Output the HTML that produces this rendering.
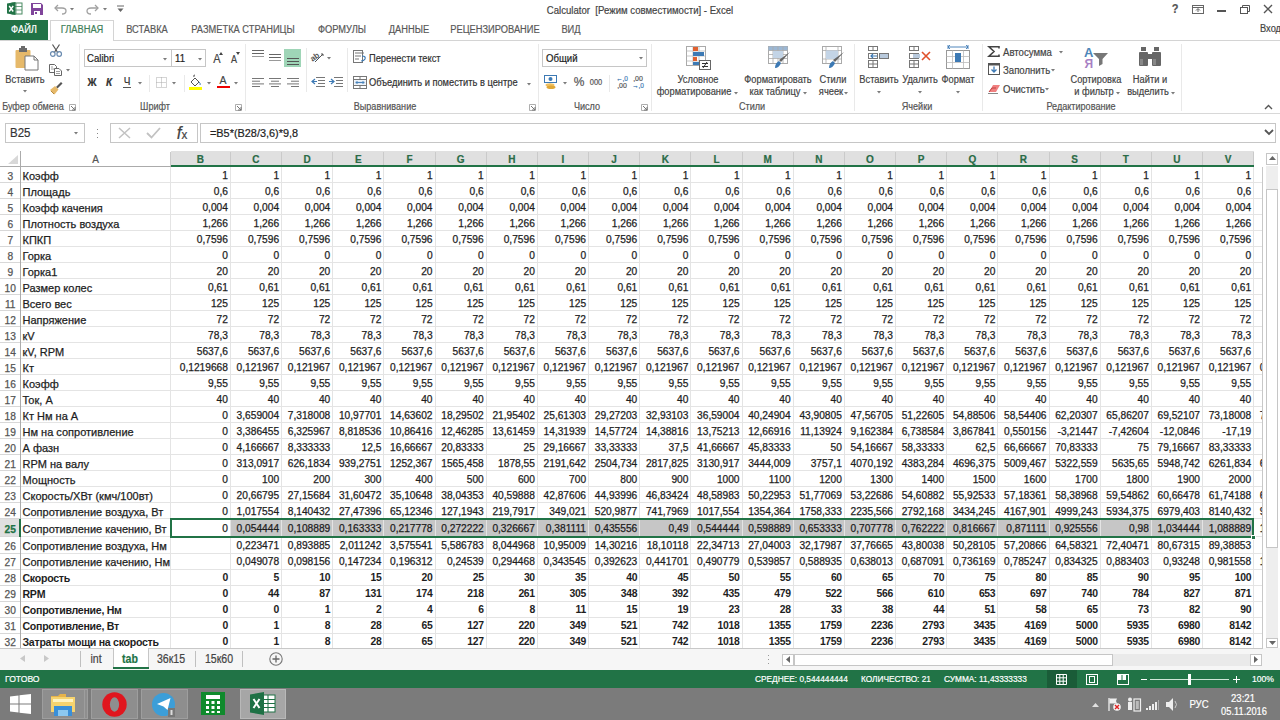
<!DOCTYPE html>
<html><head><meta charset="utf-8"><style>
html,body{margin:0;padding:0;width:1280px;height:720px;overflow:hidden;background:#fff;position:relative}
body{font-family:"Liberation Sans",sans-serif}
.b{position:absolute}
.t{position:absolute;white-space:nowrap;line-height:14px;font-family:"Liberation Sans",sans-serif}
svg.b{overflow:visible}
.t{-webkit-text-stroke:0.2px currentColor}
.g .t{-webkit-text-stroke:0.25px currentColor}
</style></head><body>
<div class="b" style="left:0px;top:0px;width:1280px;height:20px;background:#fff"></div>
<svg class="b" style="left:7px;top:2px" width="15" height="13" viewBox="0 0 15 13"><rect x="5" y="1" width="10" height="11" fill="#fff" stroke="#4a8a63" stroke-width="1"/><path d="M9 1V12M5 4.5H15M5 8H15" stroke="#4a8a63" stroke-width="0.8"/><path d="M0 1.5L8.5 0V13L0 11.5Z" fill="#217346"/><path d="M2.2 4L6.2 9.5M6.2 4L2.2 9.5" stroke="#fff" stroke-width="1.4"/></svg>
<svg class="b" style="left:31px;top:3px" width="12" height="12" viewBox="0 0 12 12"><path d="M0 0H10L12 2V12H0Z" fill="#80459b"/><rect x="2" y="1" width="8" height="4" fill="#fff"/><rect x="3" y="8" width="6" height="4" fill="#fff"/><rect x="4" y="9" width="2" height="2" fill="#80459b"/></svg>
<svg class="b" style="left:54px;top:4px" width="13" height="10" viewBox="0 0 13 10"><path d="M4 1L1 4L4 7" fill="none" stroke="#a0a0a0" stroke-width="1.3"/><path d="M1.5 4H8Q12 4 12 7Q12 10 8 10" fill="none" stroke="#a0a0a0" stroke-width="1.3"/></svg>
<svg class="b" style="left:70px;top:8px" width="4" height="2.5" viewBox="0 0 4 2.5"><path d="M0 0H4L2 2.5Z" fill="#7a7a7a"/></svg>
<svg class="b" style="left:86px;top:4px" width="13" height="10" viewBox="0 0 13 10"><path d="M9 1L12 4L9 7" fill="none" stroke="#a0a0a0" stroke-width="1.3"/><path d="M11.5 4H5Q1 4 1 7Q1 10 5 10" fill="none" stroke="#a0a0a0" stroke-width="1.3"/></svg>
<svg class="b" style="left:103px;top:8px" width="4" height="2.5" viewBox="0 0 4 2.5"><path d="M0 0H4L2 2.5Z" fill="#7a7a7a"/></svg>
<svg class="b" style="left:117px;top:6px" width="7" height="6" viewBox="0 0 7 6"><path d="M0 0H7" stroke="#666" stroke-width="1"/><path d="M0.5 2.5H6.5L3.5 6Z" fill="#666"/></svg>
<div class="t" style="left:489.5px;width:300px;text-align:center;top:3.00px;font-size:10.75px;color:#444;font-weight:normal;transform:scaleX(0.893);transform-origin:center;">Calculator&nbsp; [Режим совместимости] - Excel</div>
<div class="t" style="left:1024.5px;width:300px;text-align:center;top:2.00px;font-size:12.32px;color:#555;font-weight:bold;transform:scaleX(0.893);transform-origin:center;">?</div>
<svg class="b" style="left:1192px;top:5px" width="12" height="9" viewBox="0 0 12 9"><rect x="0.5" y="0.5" width="11" height="8" fill="none" stroke="#666"/><path d="M0.5 2.5H11.5" stroke="#666"/><path d="M6 7V4M4 5.5L6 3.5L8 5.5" fill="none" stroke="#666"/></svg>
<div class="b" style="left:1217px;top:10px;width:9px;height:1.5px;background:#555"></div>
<svg class="b" style="left:1240px;top:5px" width="10" height="9" viewBox="0 0 10 9"><rect x="0.5" y="2.5" width="7" height="6" fill="none" stroke="#555"/><path d="M2.5 2.5V0.5H9.5V6.5H7.5" fill="none" stroke="#555"/></svg>
<svg class="b" style="left:1263px;top:4px" width="10" height="10" viewBox="0 0 10 10"><path d="M1 1L9 9M9 1L1 9" stroke="#555" stroke-width="1.4"/></svg>
<div class="b" style="left:0px;top:20px;width:47.5px;height:20px;background:#217346"></div>
<div class="t" style="left:-126.25px;width:300px;text-align:center;top:23.00px;font-size:10.42px;color:#fff;font-weight:normal;transform:scaleX(0.893);transform-origin:center;">ФАЙЛ</div>
<div class="b" style="left:50px;top:20px;width:64px;height:21px;background:#fff;border:1px solid #d4d4d4;border-bottom:none;box-sizing:border-box"></div>
<div class="t" style="left:-68px;width:300px;text-align:center;top:23.00px;font-size:10.42px;color:#3f7f5a;font-weight:normal;transform:scaleX(0.893);transform-origin:center;">ГЛАВНАЯ</div>
<div class="t" style="left:-2.6999999999999886px;width:300px;text-align:center;top:23.00px;font-size:10.42px;color:#595959;font-weight:normal;transform:scaleX(0.893);transform-origin:center;">ВСТАВКА</div>
<div class="t" style="left:93px;width:300px;text-align:center;top:23.00px;font-size:10.42px;color:#595959;font-weight:normal;transform:scaleX(0.893);transform-origin:center;">РАЗМЕТКА СТРАНИЦЫ</div>
<div class="t" style="left:192px;width:300px;text-align:center;top:23.00px;font-size:10.42px;color:#595959;font-weight:normal;transform:scaleX(0.893);transform-origin:center;">ФОРМУЛЫ</div>
<div class="t" style="left:259px;width:300px;text-align:center;top:23.00px;font-size:10.42px;color:#595959;font-weight:normal;transform:scaleX(0.893);transform-origin:center;">ДАННЫЕ</div>
<div class="t" style="left:345px;width:300px;text-align:center;top:23.00px;font-size:10.42px;color:#595959;font-weight:normal;transform:scaleX(0.893);transform-origin:center;">РЕЦЕНЗИРОВАНИЕ</div>
<div class="t" style="left:421px;width:300px;text-align:center;top:23.00px;font-size:10.42px;color:#595959;font-weight:normal;transform:scaleX(0.893);transform-origin:center;">ВИД</div>
<div class="t" style="left:1260px;top:21.50px;font-size:10.42px;color:#444;font-weight:normal;transform:scaleX(0.893);transform-origin:left;">Вход</div>
<div class="b" style="left:0px;top:39.5px;width:50px;height:1px;background:#d4d4d4"></div>
<div class="b" style="left:114px;top:39.5px;width:1166px;height:1px;background:#d4d4d4"></div>
<div class="b" style="left:0px;top:40.5px;width:1280px;height:72.5px;background:#fff"></div>
<div class="b" style="left:0px;top:112.5px;width:1280px;height:1.2px;background:#d8d8d8"></div>
<div class="b" style="left:79px;top:44px;width:1px;height:67px;background:#e9e9e9"></div>
<div class="b" style="left:245px;top:44px;width:1px;height:67px;background:#e9e9e9"></div>
<div class="b" style="left:537.6px;top:44px;width:1px;height:67px;background:#e9e9e9"></div>
<div class="b" style="left:650.7px;top:44px;width:1px;height:67px;background:#e9e9e9"></div>
<div class="b" style="left:854px;top:44px;width:1px;height:67px;background:#e9e9e9"></div>
<div class="b" style="left:981.6px;top:44px;width:1px;height:67px;background:#e9e9e9"></div>
<div class="b" style="left:1180.6px;top:44px;width:1px;height:67px;background:#e9e9e9"></div>
<div class="t" style="left:-117px;width:300px;text-align:center;top:100.00px;font-size:10.19px;color:#555;font-weight:normal;transform:scaleX(0.893);transform-origin:center;">Буфер обмена</div>
<div class="t" style="left:5px;width:300px;text-align:center;top:100.00px;font-size:10.19px;color:#555;font-weight:normal;transform:scaleX(0.893);transform-origin:center;">Шрифт</div>
<div class="t" style="left:235.3px;width:300px;text-align:center;top:100.00px;font-size:10.19px;color:#555;font-weight:normal;transform:scaleX(0.893);transform-origin:center;">Выравнивание</div>
<div class="t" style="left:437.4px;width:300px;text-align:center;top:100.00px;font-size:10.19px;color:#555;font-weight:normal;transform:scaleX(0.893);transform-origin:center;">Число</div>
<div class="t" style="left:602px;width:300px;text-align:center;top:100.00px;font-size:10.19px;color:#555;font-weight:normal;transform:scaleX(0.893);transform-origin:center;">Стили</div>
<div class="t" style="left:767px;width:300px;text-align:center;top:100.00px;font-size:10.19px;color:#555;font-weight:normal;transform:scaleX(0.893);transform-origin:center;">Ячейки</div>
<div class="t" style="left:931px;width:300px;text-align:center;top:100.00px;font-size:10.19px;color:#555;font-weight:normal;transform:scaleX(0.893);transform-origin:center;">Редактирование</div>
<svg class="b" style="left:69px;top:104px" width="7" height="7" viewBox="0 0 7 7"><path d="M0.5 0.5H6.5V6.5H0.5Z" fill="none" stroke="#999" stroke-width="0.8"/><path d="M2 2L6 6M3 6H6V3" fill="none" stroke="#777" stroke-width="1"/></svg>
<svg class="b" style="left:235px;top:104px" width="7" height="7" viewBox="0 0 7 7"><path d="M0.5 0.5H6.5V6.5H0.5Z" fill="none" stroke="#999" stroke-width="0.8"/><path d="M2 2L6 6M3 6H6V3" fill="none" stroke="#777" stroke-width="1"/></svg>
<svg class="b" style="left:528.8px;top:104px" width="7" height="7" viewBox="0 0 7 7"><path d="M0.5 0.5H6.5V6.5H0.5Z" fill="none" stroke="#999" stroke-width="0.8"/><path d="M2 2L6 6M3 6H6V3" fill="none" stroke="#777" stroke-width="1"/></svg>
<svg class="b" style="left:640.7px;top:104px" width="7" height="7" viewBox="0 0 7 7"><path d="M0.5 0.5H6.5V6.5H0.5Z" fill="none" stroke="#999" stroke-width="0.8"/><path d="M2 2L6 6M3 6H6V3" fill="none" stroke="#777" stroke-width="1"/></svg>
<svg class="b" style="left:1264px;top:104px" width="9" height="6" viewBox="0 0 9 6"><path d="M1 5L4.5 1.5L8 5" fill="none" stroke="#555" stroke-width="1.4"/></svg>
<svg class="b" style="left:15px;top:46px" width="24" height="25" viewBox="0 0 24 25"><rect x="0.5" y="4" width="15" height="18" rx="1" fill="#e6b96a"/><rect x="4" y="2" width="8" height="4" fill="#6b6b6b"/><rect x="6" y="0" width="4" height="3" fill="#6b6b6b"/><path d="M10 10H19L23 14V24H10Z" fill="#fff" stroke="#777" stroke-width="1"/><path d="M19 10V14H23" fill="none" stroke="#777" stroke-width="1"/></svg>
<div class="t" style="left:-125.5px;width:300px;text-align:center;top:72.50px;font-size:10.42px;color:#444;font-weight:normal;transform:scaleX(0.893);transform-origin:center;">Вставить</div>
<svg class="b" style="left:23px;top:90px" width="4" height="2.5" viewBox="0 0 4 2.5"><path d="M0 0H4L2 2.5Z" fill="#7a7a7a"/></svg>
<svg class="b" style="left:49px;top:44px" width="14" height="13" viewBox="0 0 14 13"><path d="M3.5 0.5L9 9M10.5 0.5L5 9" stroke="#555" stroke-width="1.2"/><circle cx="3.8" cy="10" r="2.3" fill="none" stroke="#6a8bb0" stroke-width="1.2"/><circle cx="10.2" cy="10" r="2.3" fill="none" stroke="#6a8bb0" stroke-width="1.2"/></svg>
<svg class="b" style="left:48.5px;top:63.5px" width="13" height="12" viewBox="0 0 13 12"><path d="M0.5 0.5H5.5L7.5 2.5V8.5H0.5Z" fill="#fff" stroke="#666"/><path d="M2 3H4M2 5H5" stroke="#888" stroke-width="0.8"/><path d="M5.5 4.5H10L12.5 7V11.5H5.5Z" fill="#fff" stroke="#666"/><path d="M7 7.5H11M7 9.5H11" stroke="#888" stroke-width="0.8"/></svg>
<svg class="b" style="left:66px;top:68.5px" width="4" height="2.5" viewBox="0 0 4 2.5"><path d="M0 0H4L2 2.5Z" fill="#7a7a7a"/></svg>
<svg class="b" style="left:49px;top:81px" width="14" height="14" viewBox="0 0 14 14"><path d="M7 6L12 1L13.5 2.5L8.5 7.5Z" fill="#555"/><path d="M1 9L6 5L9.5 8.5L5.5 13.5Z" fill="#e6b96a"/><path d="M2 10L5 13" stroke="#b58a3f"/></svg>
<div class="b" style="left:83.6px;top:49.3px;width:88px;height:17.4px;border:1px solid #c6c6c6;box-sizing:border-box;background:#fff"></div>
<div class="b" style="left:171.5px;top:49.3px;width:34.5px;height:17.4px;border:1px solid #c6c6c6;border-left:none;box-sizing:border-box;background:#fff"></div>
<div class="t" style="left:86.5px;top:51.00px;font-size:10.75px;color:#222;font-weight:normal;transform:scaleX(0.893);transform-origin:left;">Calibri</div>
<svg class="b" style="left:163px;top:57.5px" width="4" height="2.5" viewBox="0 0 4 2.5"><path d="M0 0H4L2 2.5Z" fill="#7a7a7a"/></svg>
<div class="t" style="left:175px;top:51.00px;font-size:10.75px;color:#222;font-weight:normal;transform:scaleX(0.893);transform-origin:left;">11</div>
<svg class="b" style="left:197.5px;top:57.5px" width="4" height="2.5" viewBox="0 0 4 2.5"><path d="M0 0H4L2 2.5Z" fill="#7a7a7a"/></svg>
<div class="t" style="left:66.5px;width:300px;text-align:center;top:52.00px;font-size:12.32px;color:#444;font-weight:normal;transform:scaleX(0.893);transform-origin:center;">A</div>
<svg class="b" style="left:219px;top:52px" width="4" height="3" viewBox="0 0 4 3"><path d="M0 3L2 0L4 3Z" fill="#444"/></svg>
<div class="t" style="left:83.5px;width:300px;text-align:center;top:53.00px;font-size:10.08px;color:#444;font-weight:normal;transform:scaleX(0.893);transform-origin:center;">A</div>
<svg class="b" style="left:236px;top:52px" width="4" height="3" viewBox="0 0 4 3"><path d="M0 0H4L2 3Z" fill="#444"/></svg>
<div class="t" style="left:-58px;width:300px;text-align:center;top:74.80px;font-size:11.2px;color:#333;font-weight:bold;transform:scaleX(0.893);transform-origin:center;">Ж</div>
<div class="t" style="left:-41.5px;width:300px;text-align:center;top:74.80px;font-size:11.2px;color:#333;font-weight:bold;transform:scaleX(0.893);transform-origin:center;font-style:italic">К</div>
<div class="t" style="left:-23px;width:300px;text-align:center;top:74.30px;font-size:11.2px;color:#333;font-weight:normal;transform:scaleX(0.893);transform-origin:center;">Ч</div>
<div class="b" style="left:123px;top:87.2px;width:8px;height:1px;background:#555"></div>
<svg class="b" style="left:138px;top:81.5px" width="4" height="2.5" viewBox="0 0 4 2.5"><path d="M0 0H4L2 2.5Z" fill="#7a7a7a"/></svg>
<div class="b" style="left:149.4px;top:75px;width:1px;height:17px;background:#e9e9e9"></div>
<svg class="b" style="left:156px;top:76.5px" width="11" height="11" viewBox="0 0 11 11"><rect x="0.5" y="0.5" width="10" height="10" fill="none" stroke="#aaa" stroke-dasharray="1 1"/><path d="M5.5 0.5V10.5M0.5 5.5H10.5" stroke="#aaa" stroke-dasharray="1 1"/></svg>
<svg class="b" style="left:172.4px;top:81.5px" width="4" height="2.5" viewBox="0 0 4 2.5"><path d="M0 0H4L2 2.5Z" fill="#7a7a7a"/></svg>
<div class="b" style="left:183.6px;top:75px;width:1px;height:17px;background:#e9e9e9"></div>
<svg class="b" style="left:188px;top:74.5px" width="15" height="15" viewBox="0 0 15 15"><path d="M3 7L7 3L11 7L7 11Z" fill="#fff" stroke="#555"/><path d="M6 2Q5 0 7 0" fill="none" stroke="#555"/><path d="M11 7Q13 9 12 10" fill="none" stroke="#3c79b4"/><rect x="1" y="12" width="13" height="3" fill="#ffff00"/></svg>
<svg class="b" style="left:207px;top:81.5px" width="4" height="2.5" viewBox="0 0 4 2.5"><path d="M0 0H4L2 2.5Z" fill="#7a7a7a"/></svg>
<div class="t" style="left:73px;width:300px;text-align:center;top:72.80px;font-size:11.76px;color:#444;font-weight:normal;transform:scaleX(0.893);transform-origin:center;">A</div>
<div class="b" style="left:216.5px;top:85.8px;width:13px;height:2.6px;background:#e00"></div>
<svg class="b" style="left:234px;top:81.5px" width="4" height="2.5" viewBox="0 0 4 2.5"><path d="M0 0H4L2 2.5Z" fill="#7a7a7a"/></svg>
<svg class="b" style="left:251.5px;top:50px" width="12" height="7" viewBox="0 0 12 7"><rect y="0" width="12" height="1" fill="#666"/><rect y="3" width="12" height="1" fill="#666"/><rect y="6" width="12" height="1" fill="#999"/></svg>
<svg class="b" style="left:269px;top:53px" width="12" height="8" viewBox="0 0 12 8"><rect y="1" width="12" height="1" fill="#666"/><rect y="4" width="12" height="1" fill="#666"/><rect y="7" width="12" height="1" fill="#999"/></svg>
<div class="b" style="left:284px;top:48.5px;width:17.4px;height:18.3px;background:#9fd5b7"></div>
<svg class="b" style="left:286.5px;top:57px" width="12" height="8" viewBox="0 0 12 8"><rect y="1" width="12" height="1" fill="#555"/><rect y="4" width="12" height="1" fill="#555"/><rect y="7" width="12" height="1" fill="#555"/></svg>
<div class="b" style="left:305.6px;top:48px;width:1px;height:44px;background:#e9e9e9"></div>
<svg class="b" style="left:311px;top:50px" width="14" height="13" viewBox="0 0 14 13"><text x="0" y="9" font-family="Liberation Sans" font-size="8" font-weight="bold" fill="#555" transform="rotate(-35 5 8)">ab</text><path d="M4 12L12 4M10 4H12V6" fill="none" stroke="#555" stroke-width="1"/></svg>
<svg class="b" style="left:327px;top:56.5px" width="4" height="2.5" viewBox="0 0 4 2.5"><path d="M0 0H4L2 2.5Z" fill="#7a7a7a"/></svg>
<svg class="b" style="left:252px;top:78px" width="12" height="9" viewBox="0 0 12 9"><rect y="0" width="12" height="1" fill="#777"/><rect y="2.7" width="8" height="1" fill="#777"/><rect y="5.4" width="12" height="1" fill="#777"/><rect y="8" width="8" height="1" fill="#777"/></svg>
<svg class="b" style="left:269px;top:78px" width="12" height="9" viewBox="0 0 12 9"><rect y="0" width="12" height="1" fill="#777"/><rect x="2" y="2.7" width="8" height="1" fill="#777"/><rect y="5.4" width="12" height="1" fill="#777"/><rect x="2" y="8" width="8" height="1" fill="#777"/></svg>
<svg class="b" style="left:287px;top:78px" width="12" height="9" viewBox="0 0 12 9"><rect y="0" width="12" height="1" fill="#777"/><rect x="4" y="2.7" width="8" height="1" fill="#777"/><rect y="5.4" width="12" height="1" fill="#777"/><rect x="4" y="8" width="8" height="1" fill="#777"/></svg>
<svg class="b" style="left:311px;top:77px" width="14" height="10" viewBox="0 0 14 10"><rect x="5" y="0" width="9" height="1" fill="#777"/><rect x="7" y="3" width="7" height="1" fill="#777"/><rect x="7" y="6" width="7" height="1" fill="#777"/><rect x="5" y="9" width="9" height="1" fill="#777"/><path d="M4 2L1 4.5L4 7M1 4.5H6" fill="none" stroke="#3c79b4" stroke-width="1.2"/></svg>
<svg class="b" style="left:329px;top:77px" width="14" height="10" viewBox="0 0 14 10"><rect x="5" y="0" width="9" height="1" fill="#777"/><rect x="7" y="3" width="7" height="1" fill="#777"/><rect x="7" y="6" width="7" height="1" fill="#777"/><rect x="5" y="9" width="9" height="1" fill="#777"/><path d="M2 2L5 4.5L2 7M0 4.5H5" fill="none" stroke="#3c79b4" stroke-width="1.2"/></svg>
<div class="b" style="left:347.3px;top:48px;width:1px;height:44px;background:#e9e9e9"></div>
<svg class="b" style="left:353px;top:50px" width="14" height="13" viewBox="0 0 14 13"><rect x="0.5" y="0.5" width="9" height="12" fill="#fff" stroke="#777"/><path d="M2 3H11M2 6H8M2 9H6" stroke="#777"/><path d="M9 6Q13 6 12 9Q11 11 8 11" fill="none" stroke="#3c79b4" stroke-width="1.2"/></svg>
<div class="t" style="left:369px;top:51.60px;font-size:10.42px;color:#333;font-weight:normal;transform:scaleX(0.893);transform-origin:left;">Перенести текст</div>
<svg class="b" style="left:353px;top:76px" width="14" height="13" viewBox="0 0 14 13"><rect x="0.5" y="0.5" width="13" height="12" fill="#fff" stroke="#777"/><path d="M0.5 3.5H13.5M0.5 9.5H13.5M7 0.5V3.5M7 9.5V12.5" stroke="#777"/><rect x="1.5" y="4.5" width="11" height="4" fill="#dde8f3"/><path d="M3 6.5H11M4.5 5L3 6.5L4.5 8M9.5 5L11 6.5L9.5 8" fill="none" stroke="#3c79b4" stroke-width="0.9"/></svg>
<div class="t" style="left:369px;top:76.00px;font-size:10.42px;color:#333;font-weight:normal;transform:scaleX(0.893);transform-origin:left;">Объединить и поместить в центре</div>
<svg class="b" style="left:527.4px;top:82.5px" width="4" height="2.5" viewBox="0 0 4 2.5"><path d="M0 0H4L2 2.5Z" fill="#7a7a7a"/></svg>
<div class="b" style="left:542.2px;top:48.5px;width:104.5px;height:18.1px;border:1px solid #c6c6c6;box-sizing:border-box;background:#fff"></div>
<div class="t" style="left:545.5px;top:50.50px;font-size:10.75px;color:#222;font-weight:normal;transform:scaleX(0.893);transform-origin:left;">Общий</div>
<svg class="b" style="left:638.6px;top:57px" width="4" height="2.5" viewBox="0 0 4 2.5"><path d="M0 0H4L2 2.5Z" fill="#7a7a7a"/></svg>
<svg class="b" style="left:544px;top:75px" width="15" height="14" viewBox="0 0 15 14"><rect x="0.5" y="0.5" width="12" height="7" fill="#fff" stroke="#3c79b4"/><circle cx="6.5" cy="4" r="2" fill="#3c79b4"/><ellipse cx="6" cy="10" rx="4.5" ry="1.8" fill="#f0c060"/><ellipse cx="7" cy="12.2" rx="4.5" ry="1.8" fill="#e0a838"/></svg>
<svg class="b" style="left:562.7px;top:81.5px" width="4" height="2.5" viewBox="0 0 4 2.5"><path d="M0 0H4L2 2.5Z" fill="#7a7a7a"/></svg>
<div class="t" style="left:428.5px;width:300px;text-align:center;top:75.00px;font-size:13.44px;color:#555;font-weight:normal;transform:scaleX(0.893);transform-origin:center;">%</div>
<div class="t" style="left:446.29999999999995px;width:300px;text-align:center;top:74.50px;font-size:8.4px;color:#555;font-weight:normal;transform:scaleX(0.893);transform-origin:center;">000</div>
<div class="b" style="left:608.5px;top:75px;width:1px;height:17px;background:#e9e9e9"></div>
<div class="t" style="left:471.5px;width:300px;text-align:center;top:71.50px;font-size:7.28px;color:#3c79b4;font-weight:normal;transform:scaleX(0.893);transform-origin:center;">←,0</div>
<div class="t" style="left:472px;width:300px;text-align:center;top:79.00px;font-size:7.84px;color:#555;font-weight:normal;transform:scaleX(0.893);transform-origin:center;">,00</div>
<div class="t" style="left:488px;width:300px;text-align:center;top:71.50px;font-size:7.84px;color:#555;font-weight:normal;transform:scaleX(0.893);transform-origin:center;">,00</div>
<div class="t" style="left:488px;width:300px;text-align:center;top:79.00px;font-size:7.28px;color:#3c79b4;font-weight:normal;transform:scaleX(0.893);transform-origin:center;">→,0</div>
<svg class="b" style="left:686px;top:46px" width="25" height="24" viewBox="0 0 25 24"><rect x="0.5" y="0.5" width="19" height="19" fill="#fff" stroke="#aaa"/><path d="M0.5 5H19.5M0.5 10H19.5M0.5 15H19.5M7 0.5V19.5M13 0.5V19.5" stroke="#bbb" stroke-width="0.8"/><rect x="7" y="1" width="5" height="4" fill="#e06030"/><rect x="7" y="6" width="11" height="4" fill="#3c79b4"/><rect x="7" y="11" width="4" height="4" fill="#e06030"/><rect x="7" y="16" width="8" height="3" fill="#3c79b4"/><rect x="13.5" y="14.5" width="11" height="9" fill="#fff" stroke="#666"/><path d="M16 17.5H22M16 20.5H22M21 16L17 22" stroke="#333" stroke-width="1"/></svg>
<div class="t" style="left:547.6px;width:300px;text-align:center;top:72.70px;font-size:10.42px;color:#444;font-weight:normal;transform:scaleX(0.893);transform-origin:center;">Условное</div>
<div class="t" style="left:544px;width:300px;text-align:center;top:85.40px;font-size:10.42px;color:#444;font-weight:normal;transform:scaleX(0.893);transform-origin:center;">форматирование</div>
<svg class="b" style="left:734px;top:91.5px" width="4" height="2.5" viewBox="0 0 4 2.5"><path d="M0 0H4L2 2.5Z" fill="#7a7a7a"/></svg>
<svg class="b" style="left:768px;top:46px" width="24" height="24" viewBox="0 0 24 24"><rect x="0.5" y="0.5" width="19" height="17" fill="#fff" stroke="#aaa"/><rect x="0.5" y="0.5" width="19" height="4" fill="#9bb7d4"/><path d="M0.5 4.5H19.5M0.5 8.5H19.5M0.5 12.5H19.5M5 0.5V17.5M10 0.5V17.5M15 0.5V17.5" stroke="#aaa" stroke-width="0.8"/><rect x="5" y="5" width="10" height="7" fill="#c3d4e6"/><path d="M22 6L13 16L11 14Z" fill="#666"/><path d="M11 15Q7 17 7 22Q11 22 13 17Z" fill="#3c79b4"/></svg>
<div class="t" style="left:627.7px;width:300px;text-align:center;top:72.70px;font-size:10.42px;color:#444;font-weight:normal;transform:scaleX(0.893);transform-origin:center;">Форматировать</div>
<div class="t" style="left:625px;width:300px;text-align:center;top:85.40px;font-size:10.42px;color:#444;font-weight:normal;transform:scaleX(0.893);transform-origin:center;">как таблицу</div>
<svg class="b" style="left:803px;top:91.5px" width="4" height="2.5" viewBox="0 0 4 2.5"><path d="M0 0H4L2 2.5Z" fill="#7a7a7a"/></svg>
<svg class="b" style="left:822px;top:46px" width="24" height="24" viewBox="0 0 24 24"><rect x="0.5" y="0.5" width="19" height="17" fill="#fff" stroke="#aaa"/><path d="M0.5 4.5H19.5M0.5 13H19.5M4 0.5V17.5M16 0.5V17.5" stroke="#aaa" stroke-width="0.8"/><rect x="4" y="4.5" width="12" height="8.5" fill="#c3d4e6"/><path d="M22 6L13 16L11 14Z" fill="#666"/><path d="M11 15Q7 17 7 22Q11 22 13 17Z" fill="#3c79b4"/></svg>
<div class="t" style="left:683px;width:300px;text-align:center;top:72.70px;font-size:10.42px;color:#444;font-weight:normal;transform:scaleX(0.893);transform-origin:center;">Стили</div>
<div class="t" style="left:680.5px;width:300px;text-align:center;top:85.40px;font-size:10.42px;color:#444;font-weight:normal;transform:scaleX(0.893);transform-origin:center;">ячеек</div>
<svg class="b" style="left:844px;top:91.5px" width="4" height="2.5" viewBox="0 0 4 2.5"><path d="M0 0H4L2 2.5Z" fill="#7a7a7a"/></svg>
<svg class="b" style="left:868px;top:46px" width="22" height="22" viewBox="0 0 22 22"><rect x="0.5" y="0.5" width="9" height="4" fill="#fff" stroke="#777"/><rect x="0.5" y="14.5" width="9" height="7" fill="#fff" stroke="#777"/><path d="M5 0.5V4.5M0.5 18H9.5M5 14.5V21.5" stroke="#777"/><rect x="0.5" y="7.5" width="9" height="5" fill="#fff" stroke="#777"/><rect x="11.5" y="7.5" width="9" height="5" fill="#b8c9dc" stroke="#777"/><path d="M9 10H3M5 8L3 10L5 12" fill="none" stroke="#3c79b4" stroke-width="1.2"/></svg>
<div class="t" style="left:728.5px;width:300px;text-align:center;top:72.70px;font-size:10.42px;color:#444;font-weight:normal;transform:scaleX(0.893);transform-origin:center;">Вставить</div>
<svg class="b" style="left:876.5px;top:90.5px" width="4" height="2.5" viewBox="0 0 4 2.5"><path d="M0 0H4L2 2.5Z" fill="#7a7a7a"/></svg>
<svg class="b" style="left:909px;top:46px" width="22" height="22" viewBox="0 0 22 22"><rect x="0.5" y="0.5" width="9" height="4" fill="#fff" stroke="#777"/><rect x="0.5" y="14.5" width="9" height="7" fill="#fff" stroke="#777"/><path d="M5 0.5V4.5M0.5 18H9.5M5 14.5V21.5" stroke="#777"/><rect x="0.5" y="7.5" width="9" height="5" fill="#fff" stroke="#777"/><rect x="4" y="8" width="7" height="4" fill="#b8c9dc"/><path d="M13 6L21 14M21 6L13 14" stroke="#e0502a" stroke-width="1.6"/></svg>
<div class="t" style="left:769.5px;width:300px;text-align:center;top:72.70px;font-size:10.42px;color:#444;font-weight:normal;transform:scaleX(0.893);transform-origin:center;">Удалить</div>
<svg class="b" style="left:917.5px;top:90.5px" width="4" height="2.5" viewBox="0 0 4 2.5"><path d="M0 0H4L2 2.5Z" fill="#7a7a7a"/></svg>
<svg class="b" style="left:946px;top:45px" width="25" height="25" viewBox="0 0 25 25"><path d="M2 2H22M2 0V4M22 0V4M4 0L2 2L4 4M20 0L22 2L20 4" fill="none" stroke="#3c79b4" stroke-width="0.9"/><rect x="0.5" y="5.5" width="23" height="18" fill="#fff" stroke="#999"/><path d="M0.5 11.5H23.5M0.5 17.5H23.5M6.5 5.5V23.5M17.5 5.5V23.5" stroke="#bbb" stroke-width="0.8"/><rect x="9" y="8" width="6" height="9" fill="#3c79b4"/></svg>
<div class="t" style="left:807.5px;width:300px;text-align:center;top:72.70px;font-size:10.42px;color:#444;font-weight:normal;transform:scaleX(0.893);transform-origin:center;">Формат</div>
<svg class="b" style="left:955.5px;top:90.5px" width="4" height="2.5" viewBox="0 0 4 2.5"><path d="M0 0H4L2 2.5Z" fill="#7a7a7a"/></svg>
<svg class="b" style="left:987.5px;top:45.5px" width="12" height="11" viewBox="0 0 12 11"><path d="M11 2.5V0.8H1L6 5.5L1 10.2H11V8.5" fill="none" stroke="#444" stroke-width="1.6"/></svg>
<div class="t" style="left:1003px;top:44.50px;font-size:10.75px;color:#444;font-weight:normal;transform:scaleX(0.893);transform-origin:left;">Автосумма</div>
<svg class="b" style="left:1059px;top:50.5px" width="4" height="2.5" viewBox="0 0 4 2.5"><path d="M0 0H4L2 2.5Z" fill="#7a7a7a"/></svg>
<svg class="b" style="left:987.5px;top:63.3px" width="12" height="12" viewBox="0 0 12 12"><rect x="0.5" y="0.5" width="11" height="11" fill="#fff" stroke="#555"/><rect x="0.5" y="0.5" width="11" height="2" fill="#555"/><path d="M6 3.5V9M3.5 6.5L6 9L8.5 6.5" fill="none" stroke="#3c79b4" stroke-width="1.3"/></svg>
<div class="t" style="left:1003px;top:63.00px;font-size:10.75px;color:#444;font-weight:normal;transform:scaleX(0.893);transform-origin:left;">Заполнить</div>
<svg class="b" style="left:1051px;top:69px" width="4" height="2.5" viewBox="0 0 4 2.5"><path d="M0 0H4L2 2.5Z" fill="#7a7a7a"/></svg>
<svg class="b" style="left:987.5px;top:83.5px" width="13" height="10" viewBox="0 0 13 10"><path d="M5 1L12 1L8 8L1 8Z" fill="#f08080"/><path d="M1 8L4 4H8" fill="none" stroke="#c04040"/><path d="M0 9.5H10" stroke="#888"/></svg>
<div class="t" style="left:1003px;top:81.50px;font-size:10.75px;color:#444;font-weight:normal;transform:scaleX(0.893);transform-origin:left;">Очистить</div>
<svg class="b" style="left:1045px;top:87.5px" width="4" height="2.5" viewBox="0 0 4 2.5"><path d="M0 0H4L2 2.5Z" fill="#7a7a7a"/></svg>
<svg class="b" style="left:1084px;top:46px" width="24" height="22" viewBox="0 0 24 22"><text x="0" y="10.5" font-family="Liberation Sans" font-size="13" font-weight="bold" fill="#4d86b8">A</text><text x="0.5" y="21.5" font-family="Liberation Sans" font-size="12" font-weight="bold" fill="#a77fc4">Я</text><path d="M9 7H24L18.5 13V18L15 20V13Z" fill="#777"/></svg>
<div class="t" style="left:946.3px;width:300px;text-align:center;top:72.70px;font-size:10.42px;color:#444;font-weight:normal;transform:scaleX(0.893);transform-origin:center;">Сортировка</div>
<div class="t" style="left:943.5px;width:300px;text-align:center;top:85.40px;font-size:10.42px;color:#444;font-weight:normal;transform:scaleX(0.893);transform-origin:center;">и фильтр</div>
<svg class="b" style="left:1116px;top:91.5px" width="4" height="2.5" viewBox="0 0 4 2.5"><path d="M0 0H4L2 2.5Z" fill="#7a7a7a"/></svg>
<svg class="b" style="left:1139px;top:47px" width="22" height="20" viewBox="0 0 22 20"><rect x="2" y="0" width="5" height="4" fill="#666"/><rect x="15" y="0" width="5" height="4" fill="#666"/><rect x="0" y="5" width="9" height="14" rx="1" fill="#666"/><rect x="13" y="5" width="9" height="14" rx="1" fill="#666"/><rect x="8" y="7" width="6" height="5" fill="#666"/><rect x="1" y="12" width="3" height="6" fill="#888"/><rect x="14" y="12" width="3" height="6" fill="#888"/></svg>
<div class="t" style="left:1000.2px;width:300px;text-align:center;top:72.70px;font-size:10.42px;color:#444;font-weight:normal;transform:scaleX(0.893);transform-origin:center;">Найти и</div>
<div class="t" style="left:998px;width:300px;text-align:center;top:85.40px;font-size:10.42px;color:#444;font-weight:normal;transform:scaleX(0.893);transform-origin:center;">выделить</div>
<svg class="b" style="left:1171px;top:91.5px" width="4" height="2.5" viewBox="0 0 4 2.5"><path d="M0 0H4L2 2.5Z" fill="#7a7a7a"/></svg>
<div class="b" style="left:0px;top:113.7px;width:1280px;height:37.3px;background:#fff"></div>
<div class="b" style="left:4.5px;top:122.5px;width:80.5px;height:20px;border:1px solid #c6c6c6;box-sizing:border-box;background:#fff"></div>
<div class="t" style="left:9.5px;top:126.00px;font-size:12.88px;color:#333;font-weight:normal;transform:scaleX(0.893);transform-origin:left;">B25</div>
<svg class="b" style="left:74px;top:132px" width="4" height="2.5" viewBox="0 0 4 2.5"><path d="M0 0H4L2 2.5Z" fill="#7a7a7a"/></svg>
<div class="b" style="left:97px;top:128.5px;width:1.2px;height:1.2px;background:#888"></div>
<div class="b" style="left:97px;top:132.5px;width:1.2px;height:1.2px;background:#888"></div>
<div class="b" style="left:97px;top:136.5px;width:1.2px;height:1.2px;background:#888"></div>
<div class="b" style="left:110px;top:122.5px;width:87.5px;height:20px;border:1px solid #c6c6c6;box-sizing:border-box;background:#fff"></div>
<svg class="b" style="left:117.5px;top:126.5px" width="13" height="12" viewBox="0 0 13 12"><path d="M1 1L12 11M12 1L1 11" stroke="#c2c2c2" stroke-width="1.5"/></svg>
<svg class="b" style="left:146px;top:127px" width="15" height="12" viewBox="0 0 15 12"><path d="M1 6L5.5 10.5L14 1" fill="none" stroke="#c2c2c2" stroke-width="1.8"/></svg>
<div class="t" style="left:32px;width:300px;text-align:center;top:126.00px;font-size:19.04px;color:#444;font-weight:normal;transform:scaleX(0.893);transform-origin:center;font-family:"Liberation Serif",serif;font-style:italic"><i>f</i><span style="font-size:13px">x</span></div>
<div class="b" style="left:200px;top:122.5px;width:1075.5px;height:20px;border:1px solid #c6c6c6;box-sizing:border-box;background:#fff"></div>
<div class="t" style="left:210px;top:126.20px;font-size:10.9px;color:#222;font-weight:normal;">=B5*(B28/3,6)*9,8</div>
<svg class="b" style="left:1264px;top:129px" width="10" height="7" viewBox="0 0 10 7"><path d="M1 1L5 5L9 1" fill="none" stroke="#555" stroke-width="1.8"/></svg>
<div class="b" style="left:0px;top:151.2px;width:1262.5px;height:15.300000000000011px;background:#fff"></div>
<div class="b" style="left:170.5px;top:151.2px;width:1083.2px;height:15.300000000000011px;background:#e0e0e0"></div>
<svg class="b" style="left:8px;top:155px" width="10" height="9" viewBox="0 0 10 9"><path d="M10 0V9H0Z" fill="#d8d8d8"/></svg>
<div class="b" style="left:20.0px;top:151.2px;width:1px;height:15.300000000000011px;background:#ababab"></div>
<div class="b" style="left:170.0px;top:152.2px;width:1px;height:14.300000000000011px;background:#cacaca"></div>
<div class="b" style="left:229.9px;top:152.2px;width:1px;height:14.300000000000011px;background:#cacaca"></div>
<div class="b" style="left:281.065px;top:152.2px;width:1px;height:14.300000000000011px;background:#cacaca"></div>
<div class="b" style="left:332.23px;top:152.2px;width:1px;height:14.300000000000011px;background:#cacaca"></div>
<div class="b" style="left:383.395px;top:152.2px;width:1px;height:14.300000000000011px;background:#cacaca"></div>
<div class="b" style="left:434.56px;top:152.2px;width:1px;height:14.300000000000011px;background:#cacaca"></div>
<div class="b" style="left:485.725px;top:152.2px;width:1px;height:14.300000000000011px;background:#cacaca"></div>
<div class="b" style="left:536.89px;top:152.2px;width:1px;height:14.300000000000011px;background:#cacaca"></div>
<div class="b" style="left:588.055px;top:152.2px;width:1px;height:14.300000000000011px;background:#cacaca"></div>
<div class="b" style="left:639.22px;top:152.2px;width:1px;height:14.300000000000011px;background:#cacaca"></div>
<div class="b" style="left:690.385px;top:152.2px;width:1px;height:14.300000000000011px;background:#cacaca"></div>
<div class="b" style="left:741.55px;top:152.2px;width:1px;height:14.300000000000011px;background:#cacaca"></div>
<div class="b" style="left:792.7149999999999px;top:152.2px;width:1px;height:14.300000000000011px;background:#cacaca"></div>
<div class="b" style="left:843.88px;top:152.2px;width:1px;height:14.300000000000011px;background:#cacaca"></div>
<div class="b" style="left:895.045px;top:152.2px;width:1px;height:14.300000000000011px;background:#cacaca"></div>
<div class="b" style="left:946.2099999999999px;top:152.2px;width:1px;height:14.300000000000011px;background:#cacaca"></div>
<div class="b" style="left:997.375px;top:152.2px;width:1px;height:14.300000000000011px;background:#cacaca"></div>
<div class="b" style="left:1048.54px;top:152.2px;width:1px;height:14.300000000000011px;background:#cacaca"></div>
<div class="b" style="left:1099.705px;top:152.2px;width:1px;height:14.300000000000011px;background:#cacaca"></div>
<div class="b" style="left:1150.8700000000001px;top:152.2px;width:1px;height:14.300000000000011px;background:#cacaca"></div>
<div class="b" style="left:1202.035px;top:152.2px;width:1px;height:14.300000000000011px;background:#cacaca"></div>
<div class="b" style="left:1253.2px;top:152.2px;width:1px;height:14.300000000000011px;background:#cacaca"></div>
<div class="t" style="left:-54.5px;width:300px;text-align:center;top:153.00px;font-size:10px;color:#555;font-weight:normal;">A</div>
<div class="t" style="left:50.44999999999999px;width:300px;text-align:center;top:153.00px;font-size:10px;color:#2a6b47;font-weight:bold;">B</div>
<div class="t" style="left:105.98250000000002px;width:300px;text-align:center;top:153.00px;font-size:10px;color:#2a6b47;font-weight:bold;">C</div>
<div class="t" style="left:157.14750000000004px;width:300px;text-align:center;top:153.00px;font-size:10px;color:#2a6b47;font-weight:bold;">D</div>
<div class="t" style="left:208.3125px;width:300px;text-align:center;top:153.00px;font-size:10px;color:#2a6b47;font-weight:bold;">E</div>
<div class="t" style="left:259.47749999999996px;width:300px;text-align:center;top:153.00px;font-size:10px;color:#2a6b47;font-weight:bold;">F</div>
<div class="t" style="left:310.64250000000004px;width:300px;text-align:center;top:153.00px;font-size:10px;color:#2a6b47;font-weight:bold;">G</div>
<div class="t" style="left:361.8075px;width:300px;text-align:center;top:153.00px;font-size:10px;color:#2a6b47;font-weight:bold;">H</div>
<div class="t" style="left:412.97249999999997px;width:300px;text-align:center;top:153.00px;font-size:10px;color:#2a6b47;font-weight:bold;">I</div>
<div class="t" style="left:464.13750000000005px;width:300px;text-align:center;top:153.00px;font-size:10px;color:#2a6b47;font-weight:bold;">J</div>
<div class="t" style="left:515.3025px;width:300px;text-align:center;top:153.00px;font-size:10px;color:#2a6b47;font-weight:bold;">K</div>
<div class="t" style="left:566.4675px;width:300px;text-align:center;top:153.00px;font-size:10px;color:#2a6b47;font-weight:bold;">L</div>
<div class="t" style="left:617.6324999999999px;width:300px;text-align:center;top:153.00px;font-size:10px;color:#2a6b47;font-weight:bold;">M</div>
<div class="t" style="left:668.7974999999999px;width:300px;text-align:center;top:153.00px;font-size:10px;color:#2a6b47;font-weight:bold;">N</div>
<div class="t" style="left:719.9625px;width:300px;text-align:center;top:153.00px;font-size:10px;color:#2a6b47;font-weight:bold;">O</div>
<div class="t" style="left:771.1274999999999px;width:300px;text-align:center;top:153.00px;font-size:10px;color:#2a6b47;font-weight:bold;">P</div>
<div class="t" style="left:822.2925px;width:300px;text-align:center;top:153.00px;font-size:10px;color:#2a6b47;font-weight:bold;">Q</div>
<div class="t" style="left:873.4575px;width:300px;text-align:center;top:153.00px;font-size:10px;color:#2a6b47;font-weight:bold;">R</div>
<div class="t" style="left:924.6225px;width:300px;text-align:center;top:153.00px;font-size:10px;color:#2a6b47;font-weight:bold;">S</div>
<div class="t" style="left:975.7874999999999px;width:300px;text-align:center;top:153.00px;font-size:10px;color:#2a6b47;font-weight:bold;">T</div>
<div class="t" style="left:1026.9525px;width:300px;text-align:center;top:153.00px;font-size:10px;color:#2a6b47;font-weight:bold;">U</div>
<div class="t" style="left:1078.1175px;width:300px;text-align:center;top:153.00px;font-size:10px;color:#2a6b47;font-weight:bold;">V</div>
<div class="b" style="left:0px;top:165.5px;width:170.5px;height:1px;background:#ababab"></div>
<div class="b" style="left:170.5px;top:165.3px;width:1083.2px;height:1.7px;background:#217346"></div>
<div class="b" style="left:0px;top:167.0px;width:1262.5px;height:481.79999999999995px;background:#fff"></div>
<div class="b" style="left:230.4px;top:518.5px;width:1023.3000000000001px;height:18.299999999999955px;background:#c6c6c6"></div>
<div class="b" style="left:0px;top:518.5px;width:20px;height:18.299999999999955px;background:#e0e0e0"></div>
<div class="b" style="left:0px;top:182.0px;width:20.5px;height:1px;background:#d8d8d8"></div>
<div class="b" style="left:20.5px;top:182.0px;width:1242px;height:1px;background:#e4e4e4"></div>
<div class="b" style="left:0px;top:198.0px;width:20.5px;height:1px;background:#d8d8d8"></div>
<div class="b" style="left:20.5px;top:198.0px;width:1242px;height:1px;background:#e4e4e4"></div>
<div class="b" style="left:0px;top:214.0px;width:20.5px;height:1px;background:#d8d8d8"></div>
<div class="b" style="left:20.5px;top:214.0px;width:1242px;height:1px;background:#e4e4e4"></div>
<div class="b" style="left:0px;top:230.0px;width:20.5px;height:1px;background:#d8d8d8"></div>
<div class="b" style="left:20.5px;top:230.0px;width:1242px;height:1px;background:#e4e4e4"></div>
<div class="b" style="left:0px;top:246.0px;width:20.5px;height:1px;background:#d8d8d8"></div>
<div class="b" style="left:20.5px;top:246.0px;width:1242px;height:1px;background:#e4e4e4"></div>
<div class="b" style="left:0px;top:262.0px;width:20.5px;height:1px;background:#d8d8d8"></div>
<div class="b" style="left:20.5px;top:262.0px;width:1242px;height:1px;background:#e4e4e4"></div>
<div class="b" style="left:0px;top:278.0px;width:20.5px;height:1px;background:#d8d8d8"></div>
<div class="b" style="left:20.5px;top:278.0px;width:1242px;height:1px;background:#e4e4e4"></div>
<div class="b" style="left:0px;top:294.0px;width:20.5px;height:1px;background:#d8d8d8"></div>
<div class="b" style="left:20.5px;top:294.0px;width:1242px;height:1px;background:#e4e4e4"></div>
<div class="b" style="left:0px;top:310.0px;width:20.5px;height:1px;background:#d8d8d8"></div>
<div class="b" style="left:20.5px;top:310.0px;width:1242px;height:1px;background:#e4e4e4"></div>
<div class="b" style="left:0px;top:326.0px;width:20.5px;height:1px;background:#d8d8d8"></div>
<div class="b" style="left:20.5px;top:326.0px;width:1242px;height:1px;background:#e4e4e4"></div>
<div class="b" style="left:0px;top:342.0px;width:20.5px;height:1px;background:#d8d8d8"></div>
<div class="b" style="left:20.5px;top:342.0px;width:1242px;height:1px;background:#e4e4e4"></div>
<div class="b" style="left:0px;top:358.0px;width:20.5px;height:1px;background:#d8d8d8"></div>
<div class="b" style="left:20.5px;top:358.0px;width:1242px;height:1px;background:#e4e4e4"></div>
<div class="b" style="left:0px;top:374.0px;width:20.5px;height:1px;background:#d8d8d8"></div>
<div class="b" style="left:20.5px;top:374.0px;width:1242px;height:1px;background:#e4e4e4"></div>
<div class="b" style="left:0px;top:390.0px;width:20.5px;height:1px;background:#d8d8d8"></div>
<div class="b" style="left:20.5px;top:390.0px;width:1242px;height:1px;background:#e4e4e4"></div>
<div class="b" style="left:0px;top:406.0px;width:20.5px;height:1px;background:#d8d8d8"></div>
<div class="b" style="left:20.5px;top:406.0px;width:1242px;height:1px;background:#e4e4e4"></div>
<div class="b" style="left:0px;top:422.0px;width:20.5px;height:1px;background:#d8d8d8"></div>
<div class="b" style="left:20.5px;top:422.0px;width:1242px;height:1px;background:#e4e4e4"></div>
<div class="b" style="left:0px;top:438.0px;width:20.5px;height:1px;background:#d8d8d8"></div>
<div class="b" style="left:20.5px;top:438.0px;width:1242px;height:1px;background:#e4e4e4"></div>
<div class="b" style="left:0px;top:454.0px;width:20.5px;height:1px;background:#d8d8d8"></div>
<div class="b" style="left:20.5px;top:454.0px;width:1242px;height:1px;background:#e4e4e4"></div>
<div class="b" style="left:0px;top:470.0px;width:20.5px;height:1px;background:#d8d8d8"></div>
<div class="b" style="left:20.5px;top:470.0px;width:1242px;height:1px;background:#e4e4e4"></div>
<div class="b" style="left:0px;top:486.0px;width:20.5px;height:1px;background:#d8d8d8"></div>
<div class="b" style="left:20.5px;top:486.0px;width:1242px;height:1px;background:#e4e4e4"></div>
<div class="b" style="left:0px;top:502.0px;width:20.5px;height:1px;background:#d8d8d8"></div>
<div class="b" style="left:20.5px;top:502.0px;width:1242px;height:1px;background:#e4e4e4"></div>
<div class="b" style="left:0px;top:518.0px;width:20.5px;height:1px;background:#d8d8d8"></div>
<div class="b" style="left:20.5px;top:518.0px;width:1242px;height:1px;background:#e4e4e4"></div>
<div class="b" style="left:0px;top:536.3px;width:20.5px;height:1px;background:#d8d8d8"></div>
<div class="b" style="left:20.5px;top:536.3px;width:1242px;height:1px;background:#e4e4e4"></div>
<div class="b" style="left:0px;top:553.0px;width:20.5px;height:1px;background:#d8d8d8"></div>
<div class="b" style="left:20.5px;top:553.0px;width:1242px;height:1px;background:#e4e4e4"></div>
<div class="b" style="left:0px;top:569.0px;width:20.5px;height:1px;background:#d8d8d8"></div>
<div class="b" style="left:20.5px;top:569.0px;width:1242px;height:1px;background:#e4e4e4"></div>
<div class="b" style="left:0px;top:585.0px;width:20.5px;height:1px;background:#d8d8d8"></div>
<div class="b" style="left:20.5px;top:585.0px;width:1242px;height:1px;background:#e4e4e4"></div>
<div class="b" style="left:0px;top:601.0px;width:20.5px;height:1px;background:#d8d8d8"></div>
<div class="b" style="left:20.5px;top:601.0px;width:1242px;height:1px;background:#e4e4e4"></div>
<div class="b" style="left:0px;top:617.0px;width:20.5px;height:1px;background:#d8d8d8"></div>
<div class="b" style="left:20.5px;top:617.0px;width:1242px;height:1px;background:#e4e4e4"></div>
<div class="b" style="left:0px;top:633.0px;width:20.5px;height:1px;background:#d8d8d8"></div>
<div class="b" style="left:20.5px;top:633.0px;width:1242px;height:1px;background:#e4e4e4"></div>
<div class="b" style="left:0px;top:647.8px;width:20.5px;height:1px;background:#d8d8d8"></div>
<div class="b" style="left:20.5px;top:647.8px;width:1242px;height:1px;background:#e4e4e4"></div>
<div class="b" style="left:20.0px;top:166.5px;width:1px;height:481.79999999999995px;background:#ababab"></div>
<div class="b" style="left:170.0px;top:166.5px;width:1px;height:481.79999999999995px;background:#e4e4e4"></div>
<div class="b" style="left:229.9px;top:166.5px;width:1px;height:481.79999999999995px;background:#e4e4e4"></div>
<div class="b" style="left:281.065px;top:166.5px;width:1px;height:481.79999999999995px;background:#e4e4e4"></div>
<div class="b" style="left:332.23px;top:166.5px;width:1px;height:481.79999999999995px;background:#e4e4e4"></div>
<div class="b" style="left:383.395px;top:166.5px;width:1px;height:481.79999999999995px;background:#e4e4e4"></div>
<div class="b" style="left:434.56px;top:166.5px;width:1px;height:481.79999999999995px;background:#e4e4e4"></div>
<div class="b" style="left:485.725px;top:166.5px;width:1px;height:481.79999999999995px;background:#e4e4e4"></div>
<div class="b" style="left:536.89px;top:166.5px;width:1px;height:481.79999999999995px;background:#e4e4e4"></div>
<div class="b" style="left:588.055px;top:166.5px;width:1px;height:481.79999999999995px;background:#e4e4e4"></div>
<div class="b" style="left:639.22px;top:166.5px;width:1px;height:481.79999999999995px;background:#e4e4e4"></div>
<div class="b" style="left:690.385px;top:166.5px;width:1px;height:481.79999999999995px;background:#e4e4e4"></div>
<div class="b" style="left:741.55px;top:166.5px;width:1px;height:481.79999999999995px;background:#e4e4e4"></div>
<div class="b" style="left:792.7149999999999px;top:166.5px;width:1px;height:481.79999999999995px;background:#e4e4e4"></div>
<div class="b" style="left:843.88px;top:166.5px;width:1px;height:481.79999999999995px;background:#e4e4e4"></div>
<div class="b" style="left:895.045px;top:166.5px;width:1px;height:481.79999999999995px;background:#e4e4e4"></div>
<div class="b" style="left:946.2099999999999px;top:166.5px;width:1px;height:481.79999999999995px;background:#e4e4e4"></div>
<div class="b" style="left:997.375px;top:166.5px;width:1px;height:481.79999999999995px;background:#e4e4e4"></div>
<div class="b" style="left:1048.54px;top:166.5px;width:1px;height:481.79999999999995px;background:#e4e4e4"></div>
<div class="b" style="left:1099.705px;top:166.5px;width:1px;height:481.79999999999995px;background:#e4e4e4"></div>
<div class="b" style="left:1150.8700000000001px;top:166.5px;width:1px;height:481.79999999999995px;background:#e4e4e4"></div>
<div class="b" style="left:1202.035px;top:166.5px;width:1px;height:481.79999999999995px;background:#e4e4e4"></div>
<div class="b" style="left:1253.2px;top:166.5px;width:1px;height:481.79999999999995px;background:#e4e4e4"></div>
<div class="b" style="left:1262px;top:166.5px;width:1px;height:481.79999999999995px;background:#c8c8c8"></div>
<div class="b" style="left:19px;top:518.5px;width:2px;height:18.299999999999955px;background:#217346"></div>
<div class="b g" style="left:0;top:0;width:1262px;height:720px;overflow:hidden">
<div class="t" style="left:-139.75px;width:300px;text-align:center;top:169.97px;font-size:10.2px;color:#555;font-weight:normal;">3</div>
<div class="t" style="left:22.5px;top:168.69px;font-size:11px;color:#1e1e1e;font-weight:normal;">Коэфф</div>
<div class="t" style="left:-72.1px;width:300px;text-align:right;top:168.97px;font-size:10.2px;color:#1e1e1e;font-weight:normal;">1</div>
<div class="t" style="left:-20.935000000000002px;width:300px;text-align:right;top:168.97px;font-size:10.2px;color:#1e1e1e;font-weight:normal;">1</div>
<div class="t" style="left:30.230000000000018px;width:300px;text-align:right;top:168.97px;font-size:10.2px;color:#1e1e1e;font-weight:normal;">1</div>
<div class="t" style="left:81.39499999999998px;width:300px;text-align:right;top:168.97px;font-size:10.2px;color:#1e1e1e;font-weight:normal;">1</div>
<div class="t" style="left:132.56px;width:300px;text-align:right;top:168.97px;font-size:10.2px;color:#1e1e1e;font-weight:normal;">1</div>
<div class="t" style="left:183.72500000000002px;width:300px;text-align:right;top:168.97px;font-size:10.2px;color:#1e1e1e;font-weight:normal;">1</div>
<div class="t" style="left:234.89px;width:300px;text-align:right;top:168.97px;font-size:10.2px;color:#1e1e1e;font-weight:normal;">1</div>
<div class="t" style="left:286.05499999999995px;width:300px;text-align:right;top:168.97px;font-size:10.2px;color:#1e1e1e;font-weight:normal;">1</div>
<div class="t" style="left:337.22px;width:300px;text-align:right;top:168.97px;font-size:10.2px;color:#1e1e1e;font-weight:normal;">1</div>
<div class="t" style="left:388.385px;width:300px;text-align:right;top:168.97px;font-size:10.2px;color:#1e1e1e;font-weight:normal;">1</div>
<div class="t" style="left:439.54999999999995px;width:300px;text-align:right;top:168.97px;font-size:10.2px;color:#1e1e1e;font-weight:normal;">1</div>
<div class="t" style="left:490.7149999999999px;width:300px;text-align:right;top:168.97px;font-size:10.2px;color:#1e1e1e;font-weight:normal;">1</div>
<div class="t" style="left:541.88px;width:300px;text-align:right;top:168.97px;font-size:10.2px;color:#1e1e1e;font-weight:normal;">1</div>
<div class="t" style="left:593.045px;width:300px;text-align:right;top:168.97px;font-size:10.2px;color:#1e1e1e;font-weight:normal;">1</div>
<div class="t" style="left:644.2099999999999px;width:300px;text-align:right;top:168.97px;font-size:10.2px;color:#1e1e1e;font-weight:normal;">1</div>
<div class="t" style="left:695.375px;width:300px;text-align:right;top:168.97px;font-size:10.2px;color:#1e1e1e;font-weight:normal;">1</div>
<div class="t" style="left:746.54px;width:300px;text-align:right;top:168.97px;font-size:10.2px;color:#1e1e1e;font-weight:normal;">1</div>
<div class="t" style="left:797.7049999999999px;width:300px;text-align:right;top:168.97px;font-size:10.2px;color:#1e1e1e;font-weight:normal;">1</div>
<div class="t" style="left:848.8700000000001px;width:300px;text-align:right;top:168.97px;font-size:10.2px;color:#1e1e1e;font-weight:normal;">1</div>
<div class="t" style="left:900.0350000000001px;width:300px;text-align:right;top:168.97px;font-size:10.2px;color:#1e1e1e;font-weight:normal;">1</div>
<div class="t" style="left:951.2px;width:300px;text-align:right;top:168.97px;font-size:10.2px;color:#1e1e1e;font-weight:normal;">1</div>
<div class="t" style="left:-139.75px;width:300px;text-align:center;top:185.97px;font-size:10.2px;color:#555;font-weight:normal;">4</div>
<div class="t" style="left:22.5px;top:184.69px;font-size:11px;color:#1e1e1e;font-weight:normal;">Площадь</div>
<div class="t" style="left:-72.1px;width:300px;text-align:right;top:184.97px;font-size:10.2px;color:#1e1e1e;font-weight:normal;">0,6</div>
<div class="t" style="left:-20.935000000000002px;width:300px;text-align:right;top:184.97px;font-size:10.2px;color:#1e1e1e;font-weight:normal;">0,6</div>
<div class="t" style="left:30.230000000000018px;width:300px;text-align:right;top:184.97px;font-size:10.2px;color:#1e1e1e;font-weight:normal;">0,6</div>
<div class="t" style="left:81.39499999999998px;width:300px;text-align:right;top:184.97px;font-size:10.2px;color:#1e1e1e;font-weight:normal;">0,6</div>
<div class="t" style="left:132.56px;width:300px;text-align:right;top:184.97px;font-size:10.2px;color:#1e1e1e;font-weight:normal;">0,6</div>
<div class="t" style="left:183.72500000000002px;width:300px;text-align:right;top:184.97px;font-size:10.2px;color:#1e1e1e;font-weight:normal;">0,6</div>
<div class="t" style="left:234.89px;width:300px;text-align:right;top:184.97px;font-size:10.2px;color:#1e1e1e;font-weight:normal;">0,6</div>
<div class="t" style="left:286.05499999999995px;width:300px;text-align:right;top:184.97px;font-size:10.2px;color:#1e1e1e;font-weight:normal;">0,6</div>
<div class="t" style="left:337.22px;width:300px;text-align:right;top:184.97px;font-size:10.2px;color:#1e1e1e;font-weight:normal;">0,6</div>
<div class="t" style="left:388.385px;width:300px;text-align:right;top:184.97px;font-size:10.2px;color:#1e1e1e;font-weight:normal;">0,6</div>
<div class="t" style="left:439.54999999999995px;width:300px;text-align:right;top:184.97px;font-size:10.2px;color:#1e1e1e;font-weight:normal;">0,6</div>
<div class="t" style="left:490.7149999999999px;width:300px;text-align:right;top:184.97px;font-size:10.2px;color:#1e1e1e;font-weight:normal;">0,6</div>
<div class="t" style="left:541.88px;width:300px;text-align:right;top:184.97px;font-size:10.2px;color:#1e1e1e;font-weight:normal;">0,6</div>
<div class="t" style="left:593.045px;width:300px;text-align:right;top:184.97px;font-size:10.2px;color:#1e1e1e;font-weight:normal;">0,6</div>
<div class="t" style="left:644.2099999999999px;width:300px;text-align:right;top:184.97px;font-size:10.2px;color:#1e1e1e;font-weight:normal;">0,6</div>
<div class="t" style="left:695.375px;width:300px;text-align:right;top:184.97px;font-size:10.2px;color:#1e1e1e;font-weight:normal;">0,6</div>
<div class="t" style="left:746.54px;width:300px;text-align:right;top:184.97px;font-size:10.2px;color:#1e1e1e;font-weight:normal;">0,6</div>
<div class="t" style="left:797.7049999999999px;width:300px;text-align:right;top:184.97px;font-size:10.2px;color:#1e1e1e;font-weight:normal;">0,6</div>
<div class="t" style="left:848.8700000000001px;width:300px;text-align:right;top:184.97px;font-size:10.2px;color:#1e1e1e;font-weight:normal;">0,6</div>
<div class="t" style="left:900.0350000000001px;width:300px;text-align:right;top:184.97px;font-size:10.2px;color:#1e1e1e;font-weight:normal;">0,6</div>
<div class="t" style="left:951.2px;width:300px;text-align:right;top:184.97px;font-size:10.2px;color:#1e1e1e;font-weight:normal;">0,6</div>
<div class="t" style="left:-139.75px;width:300px;text-align:center;top:201.97px;font-size:10.2px;color:#555;font-weight:normal;">5</div>
<div class="t" style="left:22.5px;top:200.69px;font-size:11px;color:#1e1e1e;font-weight:normal;">Коэфф качения</div>
<div class="t" style="left:-72.1px;width:300px;text-align:right;top:200.97px;font-size:10.2px;color:#1e1e1e;font-weight:normal;">0,004</div>
<div class="t" style="left:-20.935000000000002px;width:300px;text-align:right;top:200.97px;font-size:10.2px;color:#1e1e1e;font-weight:normal;">0,004</div>
<div class="t" style="left:30.230000000000018px;width:300px;text-align:right;top:200.97px;font-size:10.2px;color:#1e1e1e;font-weight:normal;">0,004</div>
<div class="t" style="left:81.39499999999998px;width:300px;text-align:right;top:200.97px;font-size:10.2px;color:#1e1e1e;font-weight:normal;">0,004</div>
<div class="t" style="left:132.56px;width:300px;text-align:right;top:200.97px;font-size:10.2px;color:#1e1e1e;font-weight:normal;">0,004</div>
<div class="t" style="left:183.72500000000002px;width:300px;text-align:right;top:200.97px;font-size:10.2px;color:#1e1e1e;font-weight:normal;">0,004</div>
<div class="t" style="left:234.89px;width:300px;text-align:right;top:200.97px;font-size:10.2px;color:#1e1e1e;font-weight:normal;">0,004</div>
<div class="t" style="left:286.05499999999995px;width:300px;text-align:right;top:200.97px;font-size:10.2px;color:#1e1e1e;font-weight:normal;">0,004</div>
<div class="t" style="left:337.22px;width:300px;text-align:right;top:200.97px;font-size:10.2px;color:#1e1e1e;font-weight:normal;">0,004</div>
<div class="t" style="left:388.385px;width:300px;text-align:right;top:200.97px;font-size:10.2px;color:#1e1e1e;font-weight:normal;">0,004</div>
<div class="t" style="left:439.54999999999995px;width:300px;text-align:right;top:200.97px;font-size:10.2px;color:#1e1e1e;font-weight:normal;">0,004</div>
<div class="t" style="left:490.7149999999999px;width:300px;text-align:right;top:200.97px;font-size:10.2px;color:#1e1e1e;font-weight:normal;">0,004</div>
<div class="t" style="left:541.88px;width:300px;text-align:right;top:200.97px;font-size:10.2px;color:#1e1e1e;font-weight:normal;">0,004</div>
<div class="t" style="left:593.045px;width:300px;text-align:right;top:200.97px;font-size:10.2px;color:#1e1e1e;font-weight:normal;">0,004</div>
<div class="t" style="left:644.2099999999999px;width:300px;text-align:right;top:200.97px;font-size:10.2px;color:#1e1e1e;font-weight:normal;">0,004</div>
<div class="t" style="left:695.375px;width:300px;text-align:right;top:200.97px;font-size:10.2px;color:#1e1e1e;font-weight:normal;">0,004</div>
<div class="t" style="left:746.54px;width:300px;text-align:right;top:200.97px;font-size:10.2px;color:#1e1e1e;font-weight:normal;">0,004</div>
<div class="t" style="left:797.7049999999999px;width:300px;text-align:right;top:200.97px;font-size:10.2px;color:#1e1e1e;font-weight:normal;">0,004</div>
<div class="t" style="left:848.8700000000001px;width:300px;text-align:right;top:200.97px;font-size:10.2px;color:#1e1e1e;font-weight:normal;">0,004</div>
<div class="t" style="left:900.0350000000001px;width:300px;text-align:right;top:200.97px;font-size:10.2px;color:#1e1e1e;font-weight:normal;">0,004</div>
<div class="t" style="left:951.2px;width:300px;text-align:right;top:200.97px;font-size:10.2px;color:#1e1e1e;font-weight:normal;">0,004</div>
<div class="t" style="left:-139.75px;width:300px;text-align:center;top:217.97px;font-size:10.2px;color:#555;font-weight:normal;">6</div>
<div class="t" style="left:22.5px;top:216.69px;font-size:11px;color:#1e1e1e;font-weight:normal;">Плотность воздуха</div>
<div class="t" style="left:-72.1px;width:300px;text-align:right;top:216.97px;font-size:10.2px;color:#1e1e1e;font-weight:normal;">1,266</div>
<div class="t" style="left:-20.935000000000002px;width:300px;text-align:right;top:216.97px;font-size:10.2px;color:#1e1e1e;font-weight:normal;">1,266</div>
<div class="t" style="left:30.230000000000018px;width:300px;text-align:right;top:216.97px;font-size:10.2px;color:#1e1e1e;font-weight:normal;">1,266</div>
<div class="t" style="left:81.39499999999998px;width:300px;text-align:right;top:216.97px;font-size:10.2px;color:#1e1e1e;font-weight:normal;">1,266</div>
<div class="t" style="left:132.56px;width:300px;text-align:right;top:216.97px;font-size:10.2px;color:#1e1e1e;font-weight:normal;">1,266</div>
<div class="t" style="left:183.72500000000002px;width:300px;text-align:right;top:216.97px;font-size:10.2px;color:#1e1e1e;font-weight:normal;">1,266</div>
<div class="t" style="left:234.89px;width:300px;text-align:right;top:216.97px;font-size:10.2px;color:#1e1e1e;font-weight:normal;">1,266</div>
<div class="t" style="left:286.05499999999995px;width:300px;text-align:right;top:216.97px;font-size:10.2px;color:#1e1e1e;font-weight:normal;">1,266</div>
<div class="t" style="left:337.22px;width:300px;text-align:right;top:216.97px;font-size:10.2px;color:#1e1e1e;font-weight:normal;">1,266</div>
<div class="t" style="left:388.385px;width:300px;text-align:right;top:216.97px;font-size:10.2px;color:#1e1e1e;font-weight:normal;">1,266</div>
<div class="t" style="left:439.54999999999995px;width:300px;text-align:right;top:216.97px;font-size:10.2px;color:#1e1e1e;font-weight:normal;">1,266</div>
<div class="t" style="left:490.7149999999999px;width:300px;text-align:right;top:216.97px;font-size:10.2px;color:#1e1e1e;font-weight:normal;">1,266</div>
<div class="t" style="left:541.88px;width:300px;text-align:right;top:216.97px;font-size:10.2px;color:#1e1e1e;font-weight:normal;">1,266</div>
<div class="t" style="left:593.045px;width:300px;text-align:right;top:216.97px;font-size:10.2px;color:#1e1e1e;font-weight:normal;">1,266</div>
<div class="t" style="left:644.2099999999999px;width:300px;text-align:right;top:216.97px;font-size:10.2px;color:#1e1e1e;font-weight:normal;">1,266</div>
<div class="t" style="left:695.375px;width:300px;text-align:right;top:216.97px;font-size:10.2px;color:#1e1e1e;font-weight:normal;">1,266</div>
<div class="t" style="left:746.54px;width:300px;text-align:right;top:216.97px;font-size:10.2px;color:#1e1e1e;font-weight:normal;">1,266</div>
<div class="t" style="left:797.7049999999999px;width:300px;text-align:right;top:216.97px;font-size:10.2px;color:#1e1e1e;font-weight:normal;">1,266</div>
<div class="t" style="left:848.8700000000001px;width:300px;text-align:right;top:216.97px;font-size:10.2px;color:#1e1e1e;font-weight:normal;">1,266</div>
<div class="t" style="left:900.0350000000001px;width:300px;text-align:right;top:216.97px;font-size:10.2px;color:#1e1e1e;font-weight:normal;">1,266</div>
<div class="t" style="left:951.2px;width:300px;text-align:right;top:216.97px;font-size:10.2px;color:#1e1e1e;font-weight:normal;">1,266</div>
<div class="t" style="left:-139.75px;width:300px;text-align:center;top:233.97px;font-size:10.2px;color:#555;font-weight:normal;">7</div>
<div class="t" style="left:22.5px;top:232.69px;font-size:11px;color:#1e1e1e;font-weight:normal;">КПКП</div>
<div class="t" style="left:-72.1px;width:300px;text-align:right;top:232.97px;font-size:10.2px;color:#1e1e1e;font-weight:normal;">0,7596</div>
<div class="t" style="left:-20.935000000000002px;width:300px;text-align:right;top:232.97px;font-size:10.2px;color:#1e1e1e;font-weight:normal;">0,7596</div>
<div class="t" style="left:30.230000000000018px;width:300px;text-align:right;top:232.97px;font-size:10.2px;color:#1e1e1e;font-weight:normal;">0,7596</div>
<div class="t" style="left:81.39499999999998px;width:300px;text-align:right;top:232.97px;font-size:10.2px;color:#1e1e1e;font-weight:normal;">0,7596</div>
<div class="t" style="left:132.56px;width:300px;text-align:right;top:232.97px;font-size:10.2px;color:#1e1e1e;font-weight:normal;">0,7596</div>
<div class="t" style="left:183.72500000000002px;width:300px;text-align:right;top:232.97px;font-size:10.2px;color:#1e1e1e;font-weight:normal;">0,7596</div>
<div class="t" style="left:234.89px;width:300px;text-align:right;top:232.97px;font-size:10.2px;color:#1e1e1e;font-weight:normal;">0,7596</div>
<div class="t" style="left:286.05499999999995px;width:300px;text-align:right;top:232.97px;font-size:10.2px;color:#1e1e1e;font-weight:normal;">0,7596</div>
<div class="t" style="left:337.22px;width:300px;text-align:right;top:232.97px;font-size:10.2px;color:#1e1e1e;font-weight:normal;">0,7596</div>
<div class="t" style="left:388.385px;width:300px;text-align:right;top:232.97px;font-size:10.2px;color:#1e1e1e;font-weight:normal;">0,7596</div>
<div class="t" style="left:439.54999999999995px;width:300px;text-align:right;top:232.97px;font-size:10.2px;color:#1e1e1e;font-weight:normal;">0,7596</div>
<div class="t" style="left:490.7149999999999px;width:300px;text-align:right;top:232.97px;font-size:10.2px;color:#1e1e1e;font-weight:normal;">0,7596</div>
<div class="t" style="left:541.88px;width:300px;text-align:right;top:232.97px;font-size:10.2px;color:#1e1e1e;font-weight:normal;">0,7596</div>
<div class="t" style="left:593.045px;width:300px;text-align:right;top:232.97px;font-size:10.2px;color:#1e1e1e;font-weight:normal;">0,7596</div>
<div class="t" style="left:644.2099999999999px;width:300px;text-align:right;top:232.97px;font-size:10.2px;color:#1e1e1e;font-weight:normal;">0,7596</div>
<div class="t" style="left:695.375px;width:300px;text-align:right;top:232.97px;font-size:10.2px;color:#1e1e1e;font-weight:normal;">0,7596</div>
<div class="t" style="left:746.54px;width:300px;text-align:right;top:232.97px;font-size:10.2px;color:#1e1e1e;font-weight:normal;">0,7596</div>
<div class="t" style="left:797.7049999999999px;width:300px;text-align:right;top:232.97px;font-size:10.2px;color:#1e1e1e;font-weight:normal;">0,7596</div>
<div class="t" style="left:848.8700000000001px;width:300px;text-align:right;top:232.97px;font-size:10.2px;color:#1e1e1e;font-weight:normal;">0,7596</div>
<div class="t" style="left:900.0350000000001px;width:300px;text-align:right;top:232.97px;font-size:10.2px;color:#1e1e1e;font-weight:normal;">0,7596</div>
<div class="t" style="left:951.2px;width:300px;text-align:right;top:232.97px;font-size:10.2px;color:#1e1e1e;font-weight:normal;">0,7596</div>
<div class="t" style="left:-139.75px;width:300px;text-align:center;top:249.97px;font-size:10.2px;color:#555;font-weight:normal;">8</div>
<div class="t" style="left:22.5px;top:248.69px;font-size:11px;color:#1e1e1e;font-weight:normal;">Горка</div>
<div class="t" style="left:-72.1px;width:300px;text-align:right;top:248.97px;font-size:10.2px;color:#1e1e1e;font-weight:normal;">0</div>
<div class="t" style="left:-20.935000000000002px;width:300px;text-align:right;top:248.97px;font-size:10.2px;color:#1e1e1e;font-weight:normal;">0</div>
<div class="t" style="left:30.230000000000018px;width:300px;text-align:right;top:248.97px;font-size:10.2px;color:#1e1e1e;font-weight:normal;">0</div>
<div class="t" style="left:81.39499999999998px;width:300px;text-align:right;top:248.97px;font-size:10.2px;color:#1e1e1e;font-weight:normal;">0</div>
<div class="t" style="left:132.56px;width:300px;text-align:right;top:248.97px;font-size:10.2px;color:#1e1e1e;font-weight:normal;">0</div>
<div class="t" style="left:183.72500000000002px;width:300px;text-align:right;top:248.97px;font-size:10.2px;color:#1e1e1e;font-weight:normal;">0</div>
<div class="t" style="left:234.89px;width:300px;text-align:right;top:248.97px;font-size:10.2px;color:#1e1e1e;font-weight:normal;">0</div>
<div class="t" style="left:286.05499999999995px;width:300px;text-align:right;top:248.97px;font-size:10.2px;color:#1e1e1e;font-weight:normal;">0</div>
<div class="t" style="left:337.22px;width:300px;text-align:right;top:248.97px;font-size:10.2px;color:#1e1e1e;font-weight:normal;">0</div>
<div class="t" style="left:388.385px;width:300px;text-align:right;top:248.97px;font-size:10.2px;color:#1e1e1e;font-weight:normal;">0</div>
<div class="t" style="left:439.54999999999995px;width:300px;text-align:right;top:248.97px;font-size:10.2px;color:#1e1e1e;font-weight:normal;">0</div>
<div class="t" style="left:490.7149999999999px;width:300px;text-align:right;top:248.97px;font-size:10.2px;color:#1e1e1e;font-weight:normal;">0</div>
<div class="t" style="left:541.88px;width:300px;text-align:right;top:248.97px;font-size:10.2px;color:#1e1e1e;font-weight:normal;">0</div>
<div class="t" style="left:593.045px;width:300px;text-align:right;top:248.97px;font-size:10.2px;color:#1e1e1e;font-weight:normal;">0</div>
<div class="t" style="left:644.2099999999999px;width:300px;text-align:right;top:248.97px;font-size:10.2px;color:#1e1e1e;font-weight:normal;">0</div>
<div class="t" style="left:695.375px;width:300px;text-align:right;top:248.97px;font-size:10.2px;color:#1e1e1e;font-weight:normal;">0</div>
<div class="t" style="left:746.54px;width:300px;text-align:right;top:248.97px;font-size:10.2px;color:#1e1e1e;font-weight:normal;">0</div>
<div class="t" style="left:797.7049999999999px;width:300px;text-align:right;top:248.97px;font-size:10.2px;color:#1e1e1e;font-weight:normal;">0</div>
<div class="t" style="left:848.8700000000001px;width:300px;text-align:right;top:248.97px;font-size:10.2px;color:#1e1e1e;font-weight:normal;">0</div>
<div class="t" style="left:900.0350000000001px;width:300px;text-align:right;top:248.97px;font-size:10.2px;color:#1e1e1e;font-weight:normal;">0</div>
<div class="t" style="left:951.2px;width:300px;text-align:right;top:248.97px;font-size:10.2px;color:#1e1e1e;font-weight:normal;">0</div>
<div class="t" style="left:-139.75px;width:300px;text-align:center;top:265.97px;font-size:10.2px;color:#555;font-weight:normal;">9</div>
<div class="t" style="left:22.5px;top:264.69px;font-size:11px;color:#1e1e1e;font-weight:normal;">Горка1</div>
<div class="t" style="left:-72.1px;width:300px;text-align:right;top:264.97px;font-size:10.2px;color:#1e1e1e;font-weight:normal;">20</div>
<div class="t" style="left:-20.935000000000002px;width:300px;text-align:right;top:264.97px;font-size:10.2px;color:#1e1e1e;font-weight:normal;">20</div>
<div class="t" style="left:30.230000000000018px;width:300px;text-align:right;top:264.97px;font-size:10.2px;color:#1e1e1e;font-weight:normal;">20</div>
<div class="t" style="left:81.39499999999998px;width:300px;text-align:right;top:264.97px;font-size:10.2px;color:#1e1e1e;font-weight:normal;">20</div>
<div class="t" style="left:132.56px;width:300px;text-align:right;top:264.97px;font-size:10.2px;color:#1e1e1e;font-weight:normal;">20</div>
<div class="t" style="left:183.72500000000002px;width:300px;text-align:right;top:264.97px;font-size:10.2px;color:#1e1e1e;font-weight:normal;">20</div>
<div class="t" style="left:234.89px;width:300px;text-align:right;top:264.97px;font-size:10.2px;color:#1e1e1e;font-weight:normal;">20</div>
<div class="t" style="left:286.05499999999995px;width:300px;text-align:right;top:264.97px;font-size:10.2px;color:#1e1e1e;font-weight:normal;">20</div>
<div class="t" style="left:337.22px;width:300px;text-align:right;top:264.97px;font-size:10.2px;color:#1e1e1e;font-weight:normal;">20</div>
<div class="t" style="left:388.385px;width:300px;text-align:right;top:264.97px;font-size:10.2px;color:#1e1e1e;font-weight:normal;">20</div>
<div class="t" style="left:439.54999999999995px;width:300px;text-align:right;top:264.97px;font-size:10.2px;color:#1e1e1e;font-weight:normal;">20</div>
<div class="t" style="left:490.7149999999999px;width:300px;text-align:right;top:264.97px;font-size:10.2px;color:#1e1e1e;font-weight:normal;">20</div>
<div class="t" style="left:541.88px;width:300px;text-align:right;top:264.97px;font-size:10.2px;color:#1e1e1e;font-weight:normal;">20</div>
<div class="t" style="left:593.045px;width:300px;text-align:right;top:264.97px;font-size:10.2px;color:#1e1e1e;font-weight:normal;">20</div>
<div class="t" style="left:644.2099999999999px;width:300px;text-align:right;top:264.97px;font-size:10.2px;color:#1e1e1e;font-weight:normal;">20</div>
<div class="t" style="left:695.375px;width:300px;text-align:right;top:264.97px;font-size:10.2px;color:#1e1e1e;font-weight:normal;">20</div>
<div class="t" style="left:746.54px;width:300px;text-align:right;top:264.97px;font-size:10.2px;color:#1e1e1e;font-weight:normal;">20</div>
<div class="t" style="left:797.7049999999999px;width:300px;text-align:right;top:264.97px;font-size:10.2px;color:#1e1e1e;font-weight:normal;">20</div>
<div class="t" style="left:848.8700000000001px;width:300px;text-align:right;top:264.97px;font-size:10.2px;color:#1e1e1e;font-weight:normal;">20</div>
<div class="t" style="left:900.0350000000001px;width:300px;text-align:right;top:264.97px;font-size:10.2px;color:#1e1e1e;font-weight:normal;">20</div>
<div class="t" style="left:951.2px;width:300px;text-align:right;top:264.97px;font-size:10.2px;color:#1e1e1e;font-weight:normal;">20</div>
<div class="t" style="left:-139.75px;width:300px;text-align:center;top:281.97px;font-size:10.2px;color:#555;font-weight:normal;">10</div>
<div class="t" style="left:22.5px;top:280.69px;font-size:11px;color:#1e1e1e;font-weight:normal;">Размер колес</div>
<div class="t" style="left:-72.1px;width:300px;text-align:right;top:280.97px;font-size:10.2px;color:#1e1e1e;font-weight:normal;">0,61</div>
<div class="t" style="left:-20.935000000000002px;width:300px;text-align:right;top:280.97px;font-size:10.2px;color:#1e1e1e;font-weight:normal;">0,61</div>
<div class="t" style="left:30.230000000000018px;width:300px;text-align:right;top:280.97px;font-size:10.2px;color:#1e1e1e;font-weight:normal;">0,61</div>
<div class="t" style="left:81.39499999999998px;width:300px;text-align:right;top:280.97px;font-size:10.2px;color:#1e1e1e;font-weight:normal;">0,61</div>
<div class="t" style="left:132.56px;width:300px;text-align:right;top:280.97px;font-size:10.2px;color:#1e1e1e;font-weight:normal;">0,61</div>
<div class="t" style="left:183.72500000000002px;width:300px;text-align:right;top:280.97px;font-size:10.2px;color:#1e1e1e;font-weight:normal;">0,61</div>
<div class="t" style="left:234.89px;width:300px;text-align:right;top:280.97px;font-size:10.2px;color:#1e1e1e;font-weight:normal;">0,61</div>
<div class="t" style="left:286.05499999999995px;width:300px;text-align:right;top:280.97px;font-size:10.2px;color:#1e1e1e;font-weight:normal;">0,61</div>
<div class="t" style="left:337.22px;width:300px;text-align:right;top:280.97px;font-size:10.2px;color:#1e1e1e;font-weight:normal;">0,61</div>
<div class="t" style="left:388.385px;width:300px;text-align:right;top:280.97px;font-size:10.2px;color:#1e1e1e;font-weight:normal;">0,61</div>
<div class="t" style="left:439.54999999999995px;width:300px;text-align:right;top:280.97px;font-size:10.2px;color:#1e1e1e;font-weight:normal;">0,61</div>
<div class="t" style="left:490.7149999999999px;width:300px;text-align:right;top:280.97px;font-size:10.2px;color:#1e1e1e;font-weight:normal;">0,61</div>
<div class="t" style="left:541.88px;width:300px;text-align:right;top:280.97px;font-size:10.2px;color:#1e1e1e;font-weight:normal;">0,61</div>
<div class="t" style="left:593.045px;width:300px;text-align:right;top:280.97px;font-size:10.2px;color:#1e1e1e;font-weight:normal;">0,61</div>
<div class="t" style="left:644.2099999999999px;width:300px;text-align:right;top:280.97px;font-size:10.2px;color:#1e1e1e;font-weight:normal;">0,61</div>
<div class="t" style="left:695.375px;width:300px;text-align:right;top:280.97px;font-size:10.2px;color:#1e1e1e;font-weight:normal;">0,61</div>
<div class="t" style="left:746.54px;width:300px;text-align:right;top:280.97px;font-size:10.2px;color:#1e1e1e;font-weight:normal;">0,61</div>
<div class="t" style="left:797.7049999999999px;width:300px;text-align:right;top:280.97px;font-size:10.2px;color:#1e1e1e;font-weight:normal;">0,61</div>
<div class="t" style="left:848.8700000000001px;width:300px;text-align:right;top:280.97px;font-size:10.2px;color:#1e1e1e;font-weight:normal;">0,61</div>
<div class="t" style="left:900.0350000000001px;width:300px;text-align:right;top:280.97px;font-size:10.2px;color:#1e1e1e;font-weight:normal;">0,61</div>
<div class="t" style="left:951.2px;width:300px;text-align:right;top:280.97px;font-size:10.2px;color:#1e1e1e;font-weight:normal;">0,61</div>
<div class="t" style="left:-139.75px;width:300px;text-align:center;top:297.97px;font-size:10.2px;color:#555;font-weight:normal;">11</div>
<div class="t" style="left:22.5px;top:296.69px;font-size:11px;color:#1e1e1e;font-weight:normal;">Всего вес</div>
<div class="t" style="left:-72.1px;width:300px;text-align:right;top:296.97px;font-size:10.2px;color:#1e1e1e;font-weight:normal;">125</div>
<div class="t" style="left:-20.935000000000002px;width:300px;text-align:right;top:296.97px;font-size:10.2px;color:#1e1e1e;font-weight:normal;">125</div>
<div class="t" style="left:30.230000000000018px;width:300px;text-align:right;top:296.97px;font-size:10.2px;color:#1e1e1e;font-weight:normal;">125</div>
<div class="t" style="left:81.39499999999998px;width:300px;text-align:right;top:296.97px;font-size:10.2px;color:#1e1e1e;font-weight:normal;">125</div>
<div class="t" style="left:132.56px;width:300px;text-align:right;top:296.97px;font-size:10.2px;color:#1e1e1e;font-weight:normal;">125</div>
<div class="t" style="left:183.72500000000002px;width:300px;text-align:right;top:296.97px;font-size:10.2px;color:#1e1e1e;font-weight:normal;">125</div>
<div class="t" style="left:234.89px;width:300px;text-align:right;top:296.97px;font-size:10.2px;color:#1e1e1e;font-weight:normal;">125</div>
<div class="t" style="left:286.05499999999995px;width:300px;text-align:right;top:296.97px;font-size:10.2px;color:#1e1e1e;font-weight:normal;">125</div>
<div class="t" style="left:337.22px;width:300px;text-align:right;top:296.97px;font-size:10.2px;color:#1e1e1e;font-weight:normal;">125</div>
<div class="t" style="left:388.385px;width:300px;text-align:right;top:296.97px;font-size:10.2px;color:#1e1e1e;font-weight:normal;">125</div>
<div class="t" style="left:439.54999999999995px;width:300px;text-align:right;top:296.97px;font-size:10.2px;color:#1e1e1e;font-weight:normal;">125</div>
<div class="t" style="left:490.7149999999999px;width:300px;text-align:right;top:296.97px;font-size:10.2px;color:#1e1e1e;font-weight:normal;">125</div>
<div class="t" style="left:541.88px;width:300px;text-align:right;top:296.97px;font-size:10.2px;color:#1e1e1e;font-weight:normal;">125</div>
<div class="t" style="left:593.045px;width:300px;text-align:right;top:296.97px;font-size:10.2px;color:#1e1e1e;font-weight:normal;">125</div>
<div class="t" style="left:644.2099999999999px;width:300px;text-align:right;top:296.97px;font-size:10.2px;color:#1e1e1e;font-weight:normal;">125</div>
<div class="t" style="left:695.375px;width:300px;text-align:right;top:296.97px;font-size:10.2px;color:#1e1e1e;font-weight:normal;">125</div>
<div class="t" style="left:746.54px;width:300px;text-align:right;top:296.97px;font-size:10.2px;color:#1e1e1e;font-weight:normal;">125</div>
<div class="t" style="left:797.7049999999999px;width:300px;text-align:right;top:296.97px;font-size:10.2px;color:#1e1e1e;font-weight:normal;">125</div>
<div class="t" style="left:848.8700000000001px;width:300px;text-align:right;top:296.97px;font-size:10.2px;color:#1e1e1e;font-weight:normal;">125</div>
<div class="t" style="left:900.0350000000001px;width:300px;text-align:right;top:296.97px;font-size:10.2px;color:#1e1e1e;font-weight:normal;">125</div>
<div class="t" style="left:951.2px;width:300px;text-align:right;top:296.97px;font-size:10.2px;color:#1e1e1e;font-weight:normal;">125</div>
<div class="t" style="left:-139.75px;width:300px;text-align:center;top:313.97px;font-size:10.2px;color:#555;font-weight:normal;">12</div>
<div class="t" style="left:22.5px;top:312.69px;font-size:11px;color:#1e1e1e;font-weight:normal;">Напряжение</div>
<div class="t" style="left:-72.1px;width:300px;text-align:right;top:312.97px;font-size:10.2px;color:#1e1e1e;font-weight:normal;">72</div>
<div class="t" style="left:-20.935000000000002px;width:300px;text-align:right;top:312.97px;font-size:10.2px;color:#1e1e1e;font-weight:normal;">72</div>
<div class="t" style="left:30.230000000000018px;width:300px;text-align:right;top:312.97px;font-size:10.2px;color:#1e1e1e;font-weight:normal;">72</div>
<div class="t" style="left:81.39499999999998px;width:300px;text-align:right;top:312.97px;font-size:10.2px;color:#1e1e1e;font-weight:normal;">72</div>
<div class="t" style="left:132.56px;width:300px;text-align:right;top:312.97px;font-size:10.2px;color:#1e1e1e;font-weight:normal;">72</div>
<div class="t" style="left:183.72500000000002px;width:300px;text-align:right;top:312.97px;font-size:10.2px;color:#1e1e1e;font-weight:normal;">72</div>
<div class="t" style="left:234.89px;width:300px;text-align:right;top:312.97px;font-size:10.2px;color:#1e1e1e;font-weight:normal;">72</div>
<div class="t" style="left:286.05499999999995px;width:300px;text-align:right;top:312.97px;font-size:10.2px;color:#1e1e1e;font-weight:normal;">72</div>
<div class="t" style="left:337.22px;width:300px;text-align:right;top:312.97px;font-size:10.2px;color:#1e1e1e;font-weight:normal;">72</div>
<div class="t" style="left:388.385px;width:300px;text-align:right;top:312.97px;font-size:10.2px;color:#1e1e1e;font-weight:normal;">72</div>
<div class="t" style="left:439.54999999999995px;width:300px;text-align:right;top:312.97px;font-size:10.2px;color:#1e1e1e;font-weight:normal;">72</div>
<div class="t" style="left:490.7149999999999px;width:300px;text-align:right;top:312.97px;font-size:10.2px;color:#1e1e1e;font-weight:normal;">72</div>
<div class="t" style="left:541.88px;width:300px;text-align:right;top:312.97px;font-size:10.2px;color:#1e1e1e;font-weight:normal;">72</div>
<div class="t" style="left:593.045px;width:300px;text-align:right;top:312.97px;font-size:10.2px;color:#1e1e1e;font-weight:normal;">72</div>
<div class="t" style="left:644.2099999999999px;width:300px;text-align:right;top:312.97px;font-size:10.2px;color:#1e1e1e;font-weight:normal;">72</div>
<div class="t" style="left:695.375px;width:300px;text-align:right;top:312.97px;font-size:10.2px;color:#1e1e1e;font-weight:normal;">72</div>
<div class="t" style="left:746.54px;width:300px;text-align:right;top:312.97px;font-size:10.2px;color:#1e1e1e;font-weight:normal;">72</div>
<div class="t" style="left:797.7049999999999px;width:300px;text-align:right;top:312.97px;font-size:10.2px;color:#1e1e1e;font-weight:normal;">72</div>
<div class="t" style="left:848.8700000000001px;width:300px;text-align:right;top:312.97px;font-size:10.2px;color:#1e1e1e;font-weight:normal;">72</div>
<div class="t" style="left:900.0350000000001px;width:300px;text-align:right;top:312.97px;font-size:10.2px;color:#1e1e1e;font-weight:normal;">72</div>
<div class="t" style="left:951.2px;width:300px;text-align:right;top:312.97px;font-size:10.2px;color:#1e1e1e;font-weight:normal;">72</div>
<div class="t" style="left:-139.75px;width:300px;text-align:center;top:329.97px;font-size:10.2px;color:#555;font-weight:normal;">13</div>
<div class="t" style="left:22.5px;top:328.69px;font-size:11px;color:#1e1e1e;font-weight:normal;">кV</div>
<div class="t" style="left:-72.1px;width:300px;text-align:right;top:328.97px;font-size:10.2px;color:#1e1e1e;font-weight:normal;">78,3</div>
<div class="t" style="left:-20.935000000000002px;width:300px;text-align:right;top:328.97px;font-size:10.2px;color:#1e1e1e;font-weight:normal;">78,3</div>
<div class="t" style="left:30.230000000000018px;width:300px;text-align:right;top:328.97px;font-size:10.2px;color:#1e1e1e;font-weight:normal;">78,3</div>
<div class="t" style="left:81.39499999999998px;width:300px;text-align:right;top:328.97px;font-size:10.2px;color:#1e1e1e;font-weight:normal;">78,3</div>
<div class="t" style="left:132.56px;width:300px;text-align:right;top:328.97px;font-size:10.2px;color:#1e1e1e;font-weight:normal;">78,3</div>
<div class="t" style="left:183.72500000000002px;width:300px;text-align:right;top:328.97px;font-size:10.2px;color:#1e1e1e;font-weight:normal;">78,3</div>
<div class="t" style="left:234.89px;width:300px;text-align:right;top:328.97px;font-size:10.2px;color:#1e1e1e;font-weight:normal;">78,3</div>
<div class="t" style="left:286.05499999999995px;width:300px;text-align:right;top:328.97px;font-size:10.2px;color:#1e1e1e;font-weight:normal;">78,3</div>
<div class="t" style="left:337.22px;width:300px;text-align:right;top:328.97px;font-size:10.2px;color:#1e1e1e;font-weight:normal;">78,3</div>
<div class="t" style="left:388.385px;width:300px;text-align:right;top:328.97px;font-size:10.2px;color:#1e1e1e;font-weight:normal;">78,3</div>
<div class="t" style="left:439.54999999999995px;width:300px;text-align:right;top:328.97px;font-size:10.2px;color:#1e1e1e;font-weight:normal;">78,3</div>
<div class="t" style="left:490.7149999999999px;width:300px;text-align:right;top:328.97px;font-size:10.2px;color:#1e1e1e;font-weight:normal;">78,3</div>
<div class="t" style="left:541.88px;width:300px;text-align:right;top:328.97px;font-size:10.2px;color:#1e1e1e;font-weight:normal;">78,3</div>
<div class="t" style="left:593.045px;width:300px;text-align:right;top:328.97px;font-size:10.2px;color:#1e1e1e;font-weight:normal;">78,3</div>
<div class="t" style="left:644.2099999999999px;width:300px;text-align:right;top:328.97px;font-size:10.2px;color:#1e1e1e;font-weight:normal;">78,3</div>
<div class="t" style="left:695.375px;width:300px;text-align:right;top:328.97px;font-size:10.2px;color:#1e1e1e;font-weight:normal;">78,3</div>
<div class="t" style="left:746.54px;width:300px;text-align:right;top:328.97px;font-size:10.2px;color:#1e1e1e;font-weight:normal;">78,3</div>
<div class="t" style="left:797.7049999999999px;width:300px;text-align:right;top:328.97px;font-size:10.2px;color:#1e1e1e;font-weight:normal;">78,3</div>
<div class="t" style="left:848.8700000000001px;width:300px;text-align:right;top:328.97px;font-size:10.2px;color:#1e1e1e;font-weight:normal;">78,3</div>
<div class="t" style="left:900.0350000000001px;width:300px;text-align:right;top:328.97px;font-size:10.2px;color:#1e1e1e;font-weight:normal;">78,3</div>
<div class="t" style="left:951.2px;width:300px;text-align:right;top:328.97px;font-size:10.2px;color:#1e1e1e;font-weight:normal;">78,3</div>
<div class="t" style="left:-139.75px;width:300px;text-align:center;top:345.97px;font-size:10.2px;color:#555;font-weight:normal;">14</div>
<div class="t" style="left:22.5px;top:344.69px;font-size:11px;color:#1e1e1e;font-weight:normal;">кV, RPM</div>
<div class="t" style="left:-72.1px;width:300px;text-align:right;top:344.97px;font-size:10.2px;color:#1e1e1e;font-weight:normal;">5637,6</div>
<div class="t" style="left:-20.935000000000002px;width:300px;text-align:right;top:344.97px;font-size:10.2px;color:#1e1e1e;font-weight:normal;">5637,6</div>
<div class="t" style="left:30.230000000000018px;width:300px;text-align:right;top:344.97px;font-size:10.2px;color:#1e1e1e;font-weight:normal;">5637,6</div>
<div class="t" style="left:81.39499999999998px;width:300px;text-align:right;top:344.97px;font-size:10.2px;color:#1e1e1e;font-weight:normal;">5637,6</div>
<div class="t" style="left:132.56px;width:300px;text-align:right;top:344.97px;font-size:10.2px;color:#1e1e1e;font-weight:normal;">5637,6</div>
<div class="t" style="left:183.72500000000002px;width:300px;text-align:right;top:344.97px;font-size:10.2px;color:#1e1e1e;font-weight:normal;">5637,6</div>
<div class="t" style="left:234.89px;width:300px;text-align:right;top:344.97px;font-size:10.2px;color:#1e1e1e;font-weight:normal;">5637,6</div>
<div class="t" style="left:286.05499999999995px;width:300px;text-align:right;top:344.97px;font-size:10.2px;color:#1e1e1e;font-weight:normal;">5637,6</div>
<div class="t" style="left:337.22px;width:300px;text-align:right;top:344.97px;font-size:10.2px;color:#1e1e1e;font-weight:normal;">5637,6</div>
<div class="t" style="left:388.385px;width:300px;text-align:right;top:344.97px;font-size:10.2px;color:#1e1e1e;font-weight:normal;">5637,6</div>
<div class="t" style="left:439.54999999999995px;width:300px;text-align:right;top:344.97px;font-size:10.2px;color:#1e1e1e;font-weight:normal;">5637,6</div>
<div class="t" style="left:490.7149999999999px;width:300px;text-align:right;top:344.97px;font-size:10.2px;color:#1e1e1e;font-weight:normal;">5637,6</div>
<div class="t" style="left:541.88px;width:300px;text-align:right;top:344.97px;font-size:10.2px;color:#1e1e1e;font-weight:normal;">5637,6</div>
<div class="t" style="left:593.045px;width:300px;text-align:right;top:344.97px;font-size:10.2px;color:#1e1e1e;font-weight:normal;">5637,6</div>
<div class="t" style="left:644.2099999999999px;width:300px;text-align:right;top:344.97px;font-size:10.2px;color:#1e1e1e;font-weight:normal;">5637,6</div>
<div class="t" style="left:695.375px;width:300px;text-align:right;top:344.97px;font-size:10.2px;color:#1e1e1e;font-weight:normal;">5637,6</div>
<div class="t" style="left:746.54px;width:300px;text-align:right;top:344.97px;font-size:10.2px;color:#1e1e1e;font-weight:normal;">5637,6</div>
<div class="t" style="left:797.7049999999999px;width:300px;text-align:right;top:344.97px;font-size:10.2px;color:#1e1e1e;font-weight:normal;">5637,6</div>
<div class="t" style="left:848.8700000000001px;width:300px;text-align:right;top:344.97px;font-size:10.2px;color:#1e1e1e;font-weight:normal;">5637,6</div>
<div class="t" style="left:900.0350000000001px;width:300px;text-align:right;top:344.97px;font-size:10.2px;color:#1e1e1e;font-weight:normal;">5637,6</div>
<div class="t" style="left:951.2px;width:300px;text-align:right;top:344.97px;font-size:10.2px;color:#1e1e1e;font-weight:normal;">5637,6</div>
<div class="t" style="left:-139.75px;width:300px;text-align:center;top:361.97px;font-size:10.2px;color:#555;font-weight:normal;">15</div>
<div class="t" style="left:22.5px;top:360.69px;font-size:11px;color:#1e1e1e;font-weight:normal;">Кт</div>
<div class="t" style="left:-72.1px;width:300px;text-align:right;top:360.97px;font-size:10.2px;color:#1e1e1e;font-weight:normal;">0,1219668</div>
<div class="t" style="left:-20.935000000000002px;width:300px;text-align:right;top:360.97px;font-size:10.2px;color:#1e1e1e;font-weight:normal;">0,121967</div>
<div class="t" style="left:30.230000000000018px;width:300px;text-align:right;top:360.97px;font-size:10.2px;color:#1e1e1e;font-weight:normal;">0,121967</div>
<div class="t" style="left:81.39499999999998px;width:300px;text-align:right;top:360.97px;font-size:10.2px;color:#1e1e1e;font-weight:normal;">0,121967</div>
<div class="t" style="left:132.56px;width:300px;text-align:right;top:360.97px;font-size:10.2px;color:#1e1e1e;font-weight:normal;">0,121967</div>
<div class="t" style="left:183.72500000000002px;width:300px;text-align:right;top:360.97px;font-size:10.2px;color:#1e1e1e;font-weight:normal;">0,121967</div>
<div class="t" style="left:234.89px;width:300px;text-align:right;top:360.97px;font-size:10.2px;color:#1e1e1e;font-weight:normal;">0,121967</div>
<div class="t" style="left:286.05499999999995px;width:300px;text-align:right;top:360.97px;font-size:10.2px;color:#1e1e1e;font-weight:normal;">0,121967</div>
<div class="t" style="left:337.22px;width:300px;text-align:right;top:360.97px;font-size:10.2px;color:#1e1e1e;font-weight:normal;">0,121967</div>
<div class="t" style="left:388.385px;width:300px;text-align:right;top:360.97px;font-size:10.2px;color:#1e1e1e;font-weight:normal;">0,121967</div>
<div class="t" style="left:439.54999999999995px;width:300px;text-align:right;top:360.97px;font-size:10.2px;color:#1e1e1e;font-weight:normal;">0,121967</div>
<div class="t" style="left:490.7149999999999px;width:300px;text-align:right;top:360.97px;font-size:10.2px;color:#1e1e1e;font-weight:normal;">0,121967</div>
<div class="t" style="left:541.88px;width:300px;text-align:right;top:360.97px;font-size:10.2px;color:#1e1e1e;font-weight:normal;">0,121967</div>
<div class="t" style="left:593.045px;width:300px;text-align:right;top:360.97px;font-size:10.2px;color:#1e1e1e;font-weight:normal;">0,121967</div>
<div class="t" style="left:644.2099999999999px;width:300px;text-align:right;top:360.97px;font-size:10.2px;color:#1e1e1e;font-weight:normal;">0,121967</div>
<div class="t" style="left:695.375px;width:300px;text-align:right;top:360.97px;font-size:10.2px;color:#1e1e1e;font-weight:normal;">0,121967</div>
<div class="t" style="left:746.54px;width:300px;text-align:right;top:360.97px;font-size:10.2px;color:#1e1e1e;font-weight:normal;">0,121967</div>
<div class="t" style="left:797.7049999999999px;width:300px;text-align:right;top:360.97px;font-size:10.2px;color:#1e1e1e;font-weight:normal;">0,121967</div>
<div class="t" style="left:848.8700000000001px;width:300px;text-align:right;top:360.97px;font-size:10.2px;color:#1e1e1e;font-weight:normal;">0,121967</div>
<div class="t" style="left:900.0350000000001px;width:300px;text-align:right;top:360.97px;font-size:10.2px;color:#1e1e1e;font-weight:normal;">0,121967</div>
<div class="t" style="left:951.2px;width:300px;text-align:right;top:360.97px;font-size:10.2px;color:#1e1e1e;font-weight:normal;">0,121967</div>
<div class="t" style="left:1002.365px;width:300px;text-align:right;top:360.97px;font-size:10.2px;color:#1e1e1e;font-weight:normal;">0,121967</div>
<div class="t" style="left:-139.75px;width:300px;text-align:center;top:377.97px;font-size:10.2px;color:#555;font-weight:normal;">16</div>
<div class="t" style="left:22.5px;top:376.69px;font-size:11px;color:#1e1e1e;font-weight:normal;">Коэфф</div>
<div class="t" style="left:-72.1px;width:300px;text-align:right;top:376.97px;font-size:10.2px;color:#1e1e1e;font-weight:normal;">9,55</div>
<div class="t" style="left:-20.935000000000002px;width:300px;text-align:right;top:376.97px;font-size:10.2px;color:#1e1e1e;font-weight:normal;">9,55</div>
<div class="t" style="left:30.230000000000018px;width:300px;text-align:right;top:376.97px;font-size:10.2px;color:#1e1e1e;font-weight:normal;">9,55</div>
<div class="t" style="left:81.39499999999998px;width:300px;text-align:right;top:376.97px;font-size:10.2px;color:#1e1e1e;font-weight:normal;">9,55</div>
<div class="t" style="left:132.56px;width:300px;text-align:right;top:376.97px;font-size:10.2px;color:#1e1e1e;font-weight:normal;">9,55</div>
<div class="t" style="left:183.72500000000002px;width:300px;text-align:right;top:376.97px;font-size:10.2px;color:#1e1e1e;font-weight:normal;">9,55</div>
<div class="t" style="left:234.89px;width:300px;text-align:right;top:376.97px;font-size:10.2px;color:#1e1e1e;font-weight:normal;">9,55</div>
<div class="t" style="left:286.05499999999995px;width:300px;text-align:right;top:376.97px;font-size:10.2px;color:#1e1e1e;font-weight:normal;">9,55</div>
<div class="t" style="left:337.22px;width:300px;text-align:right;top:376.97px;font-size:10.2px;color:#1e1e1e;font-weight:normal;">9,55</div>
<div class="t" style="left:388.385px;width:300px;text-align:right;top:376.97px;font-size:10.2px;color:#1e1e1e;font-weight:normal;">9,55</div>
<div class="t" style="left:439.54999999999995px;width:300px;text-align:right;top:376.97px;font-size:10.2px;color:#1e1e1e;font-weight:normal;">9,55</div>
<div class="t" style="left:490.7149999999999px;width:300px;text-align:right;top:376.97px;font-size:10.2px;color:#1e1e1e;font-weight:normal;">9,55</div>
<div class="t" style="left:541.88px;width:300px;text-align:right;top:376.97px;font-size:10.2px;color:#1e1e1e;font-weight:normal;">9,55</div>
<div class="t" style="left:593.045px;width:300px;text-align:right;top:376.97px;font-size:10.2px;color:#1e1e1e;font-weight:normal;">9,55</div>
<div class="t" style="left:644.2099999999999px;width:300px;text-align:right;top:376.97px;font-size:10.2px;color:#1e1e1e;font-weight:normal;">9,55</div>
<div class="t" style="left:695.375px;width:300px;text-align:right;top:376.97px;font-size:10.2px;color:#1e1e1e;font-weight:normal;">9,55</div>
<div class="t" style="left:746.54px;width:300px;text-align:right;top:376.97px;font-size:10.2px;color:#1e1e1e;font-weight:normal;">9,55</div>
<div class="t" style="left:797.7049999999999px;width:300px;text-align:right;top:376.97px;font-size:10.2px;color:#1e1e1e;font-weight:normal;">9,55</div>
<div class="t" style="left:848.8700000000001px;width:300px;text-align:right;top:376.97px;font-size:10.2px;color:#1e1e1e;font-weight:normal;">9,55</div>
<div class="t" style="left:900.0350000000001px;width:300px;text-align:right;top:376.97px;font-size:10.2px;color:#1e1e1e;font-weight:normal;">9,55</div>
<div class="t" style="left:951.2px;width:300px;text-align:right;top:376.97px;font-size:10.2px;color:#1e1e1e;font-weight:normal;">9,55</div>
<div class="t" style="left:-139.75px;width:300px;text-align:center;top:393.97px;font-size:10.2px;color:#555;font-weight:normal;">17</div>
<div class="t" style="left:22.5px;top:392.69px;font-size:11px;color:#1e1e1e;font-weight:normal;">Ток, А</div>
<div class="t" style="left:-72.1px;width:300px;text-align:right;top:392.97px;font-size:10.2px;color:#1e1e1e;font-weight:normal;">40</div>
<div class="t" style="left:-20.935000000000002px;width:300px;text-align:right;top:392.97px;font-size:10.2px;color:#1e1e1e;font-weight:normal;">40</div>
<div class="t" style="left:30.230000000000018px;width:300px;text-align:right;top:392.97px;font-size:10.2px;color:#1e1e1e;font-weight:normal;">40</div>
<div class="t" style="left:81.39499999999998px;width:300px;text-align:right;top:392.97px;font-size:10.2px;color:#1e1e1e;font-weight:normal;">40</div>
<div class="t" style="left:132.56px;width:300px;text-align:right;top:392.97px;font-size:10.2px;color:#1e1e1e;font-weight:normal;">40</div>
<div class="t" style="left:183.72500000000002px;width:300px;text-align:right;top:392.97px;font-size:10.2px;color:#1e1e1e;font-weight:normal;">40</div>
<div class="t" style="left:234.89px;width:300px;text-align:right;top:392.97px;font-size:10.2px;color:#1e1e1e;font-weight:normal;">40</div>
<div class="t" style="left:286.05499999999995px;width:300px;text-align:right;top:392.97px;font-size:10.2px;color:#1e1e1e;font-weight:normal;">40</div>
<div class="t" style="left:337.22px;width:300px;text-align:right;top:392.97px;font-size:10.2px;color:#1e1e1e;font-weight:normal;">40</div>
<div class="t" style="left:388.385px;width:300px;text-align:right;top:392.97px;font-size:10.2px;color:#1e1e1e;font-weight:normal;">40</div>
<div class="t" style="left:439.54999999999995px;width:300px;text-align:right;top:392.97px;font-size:10.2px;color:#1e1e1e;font-weight:normal;">40</div>
<div class="t" style="left:490.7149999999999px;width:300px;text-align:right;top:392.97px;font-size:10.2px;color:#1e1e1e;font-weight:normal;">40</div>
<div class="t" style="left:541.88px;width:300px;text-align:right;top:392.97px;font-size:10.2px;color:#1e1e1e;font-weight:normal;">40</div>
<div class="t" style="left:593.045px;width:300px;text-align:right;top:392.97px;font-size:10.2px;color:#1e1e1e;font-weight:normal;">40</div>
<div class="t" style="left:644.2099999999999px;width:300px;text-align:right;top:392.97px;font-size:10.2px;color:#1e1e1e;font-weight:normal;">40</div>
<div class="t" style="left:695.375px;width:300px;text-align:right;top:392.97px;font-size:10.2px;color:#1e1e1e;font-weight:normal;">40</div>
<div class="t" style="left:746.54px;width:300px;text-align:right;top:392.97px;font-size:10.2px;color:#1e1e1e;font-weight:normal;">40</div>
<div class="t" style="left:797.7049999999999px;width:300px;text-align:right;top:392.97px;font-size:10.2px;color:#1e1e1e;font-weight:normal;">40</div>
<div class="t" style="left:848.8700000000001px;width:300px;text-align:right;top:392.97px;font-size:10.2px;color:#1e1e1e;font-weight:normal;">40</div>
<div class="t" style="left:900.0350000000001px;width:300px;text-align:right;top:392.97px;font-size:10.2px;color:#1e1e1e;font-weight:normal;">40</div>
<div class="t" style="left:951.2px;width:300px;text-align:right;top:392.97px;font-size:10.2px;color:#1e1e1e;font-weight:normal;">40</div>
<div class="t" style="left:-139.75px;width:300px;text-align:center;top:409.97px;font-size:10.2px;color:#555;font-weight:normal;">18</div>
<div class="t" style="left:22.5px;top:408.69px;font-size:11px;color:#1e1e1e;font-weight:normal;">Кт Нм на А</div>
<div class="t" style="left:-72.1px;width:300px;text-align:right;top:408.97px;font-size:10.2px;color:#1e1e1e;font-weight:normal;">0</div>
<div class="t" style="left:-20.935000000000002px;width:300px;text-align:right;top:408.97px;font-size:10.2px;color:#1e1e1e;font-weight:normal;">3,659004</div>
<div class="t" style="left:30.230000000000018px;width:300px;text-align:right;top:408.97px;font-size:10.2px;color:#1e1e1e;font-weight:normal;">7,318008</div>
<div class="t" style="left:81.39499999999998px;width:300px;text-align:right;top:408.97px;font-size:10.2px;color:#1e1e1e;font-weight:normal;">10,97701</div>
<div class="t" style="left:132.56px;width:300px;text-align:right;top:408.97px;font-size:10.2px;color:#1e1e1e;font-weight:normal;">14,63602</div>
<div class="t" style="left:183.72500000000002px;width:300px;text-align:right;top:408.97px;font-size:10.2px;color:#1e1e1e;font-weight:normal;">18,29502</div>
<div class="t" style="left:234.89px;width:300px;text-align:right;top:408.97px;font-size:10.2px;color:#1e1e1e;font-weight:normal;">21,95402</div>
<div class="t" style="left:286.05499999999995px;width:300px;text-align:right;top:408.97px;font-size:10.2px;color:#1e1e1e;font-weight:normal;">25,61303</div>
<div class="t" style="left:337.22px;width:300px;text-align:right;top:408.97px;font-size:10.2px;color:#1e1e1e;font-weight:normal;">29,27203</div>
<div class="t" style="left:388.385px;width:300px;text-align:right;top:408.97px;font-size:10.2px;color:#1e1e1e;font-weight:normal;">32,93103</div>
<div class="t" style="left:439.54999999999995px;width:300px;text-align:right;top:408.97px;font-size:10.2px;color:#1e1e1e;font-weight:normal;">36,59004</div>
<div class="t" style="left:490.7149999999999px;width:300px;text-align:right;top:408.97px;font-size:10.2px;color:#1e1e1e;font-weight:normal;">40,24904</div>
<div class="t" style="left:541.88px;width:300px;text-align:right;top:408.97px;font-size:10.2px;color:#1e1e1e;font-weight:normal;">43,90805</div>
<div class="t" style="left:593.045px;width:300px;text-align:right;top:408.97px;font-size:10.2px;color:#1e1e1e;font-weight:normal;">47,56705</div>
<div class="t" style="left:644.2099999999999px;width:300px;text-align:right;top:408.97px;font-size:10.2px;color:#1e1e1e;font-weight:normal;">51,22605</div>
<div class="t" style="left:695.375px;width:300px;text-align:right;top:408.97px;font-size:10.2px;color:#1e1e1e;font-weight:normal;">54,88506</div>
<div class="t" style="left:746.54px;width:300px;text-align:right;top:408.97px;font-size:10.2px;color:#1e1e1e;font-weight:normal;">58,54406</div>
<div class="t" style="left:797.7049999999999px;width:300px;text-align:right;top:408.97px;font-size:10.2px;color:#1e1e1e;font-weight:normal;">62,20307</div>
<div class="t" style="left:848.8700000000001px;width:300px;text-align:right;top:408.97px;font-size:10.2px;color:#1e1e1e;font-weight:normal;">65,86207</div>
<div class="t" style="left:900.0350000000001px;width:300px;text-align:right;top:408.97px;font-size:10.2px;color:#1e1e1e;font-weight:normal;">69,52107</div>
<div class="t" style="left:951.2px;width:300px;text-align:right;top:408.97px;font-size:10.2px;color:#1e1e1e;font-weight:normal;">73,18008</div>
<div class="t" style="left:1002.365px;width:300px;text-align:right;top:408.97px;font-size:10.2px;color:#1e1e1e;font-weight:normal;">76,83908</div>
<div class="t" style="left:-139.75px;width:300px;text-align:center;top:425.97px;font-size:10.2px;color:#555;font-weight:normal;">19</div>
<div class="t" style="left:22.5px;top:424.69px;font-size:11px;color:#1e1e1e;font-weight:normal;">Нм на сопротивление</div>
<div class="t" style="left:-72.1px;width:300px;text-align:right;top:424.97px;font-size:10.2px;color:#1e1e1e;font-weight:normal;">0</div>
<div class="t" style="left:-20.935000000000002px;width:300px;text-align:right;top:424.97px;font-size:10.2px;color:#1e1e1e;font-weight:normal;">3,386455</div>
<div class="t" style="left:30.230000000000018px;width:300px;text-align:right;top:424.97px;font-size:10.2px;color:#1e1e1e;font-weight:normal;">6,325967</div>
<div class="t" style="left:81.39499999999998px;width:300px;text-align:right;top:424.97px;font-size:10.2px;color:#1e1e1e;font-weight:normal;">8,818536</div>
<div class="t" style="left:132.56px;width:300px;text-align:right;top:424.97px;font-size:10.2px;color:#1e1e1e;font-weight:normal;">10,86416</div>
<div class="t" style="left:183.72500000000002px;width:300px;text-align:right;top:424.97px;font-size:10.2px;color:#1e1e1e;font-weight:normal;">12,46285</div>
<div class="t" style="left:234.89px;width:300px;text-align:right;top:424.97px;font-size:10.2px;color:#1e1e1e;font-weight:normal;">13,61459</div>
<div class="t" style="left:286.05499999999995px;width:300px;text-align:right;top:424.97px;font-size:10.2px;color:#1e1e1e;font-weight:normal;">14,31939</div>
<div class="t" style="left:337.22px;width:300px;text-align:right;top:424.97px;font-size:10.2px;color:#1e1e1e;font-weight:normal;">14,57724</div>
<div class="t" style="left:388.385px;width:300px;text-align:right;top:424.97px;font-size:10.2px;color:#1e1e1e;font-weight:normal;">14,38816</div>
<div class="t" style="left:439.54999999999995px;width:300px;text-align:right;top:424.97px;font-size:10.2px;color:#1e1e1e;font-weight:normal;">13,75213</div>
<div class="t" style="left:490.7149999999999px;width:300px;text-align:right;top:424.97px;font-size:10.2px;color:#1e1e1e;font-weight:normal;">12,66916</div>
<div class="t" style="left:541.88px;width:300px;text-align:right;top:424.97px;font-size:10.2px;color:#1e1e1e;font-weight:normal;">11,13924</div>
<div class="t" style="left:593.045px;width:300px;text-align:right;top:424.97px;font-size:10.2px;color:#1e1e1e;font-weight:normal;">9,162384</div>
<div class="t" style="left:644.2099999999999px;width:300px;text-align:right;top:424.97px;font-size:10.2px;color:#1e1e1e;font-weight:normal;">6,738584</div>
<div class="t" style="left:695.375px;width:300px;text-align:right;top:424.97px;font-size:10.2px;color:#1e1e1e;font-weight:normal;">3,867841</div>
<div class="t" style="left:746.54px;width:300px;text-align:right;top:424.97px;font-size:10.2px;color:#1e1e1e;font-weight:normal;">0,550156</div>
<div class="t" style="left:797.7049999999999px;width:300px;text-align:right;top:424.97px;font-size:10.2px;color:#1e1e1e;font-weight:normal;">-3,21447</div>
<div class="t" style="left:848.8700000000001px;width:300px;text-align:right;top:424.97px;font-size:10.2px;color:#1e1e1e;font-weight:normal;">-7,42604</div>
<div class="t" style="left:900.0350000000001px;width:300px;text-align:right;top:424.97px;font-size:10.2px;color:#1e1e1e;font-weight:normal;">-12,0846</div>
<div class="t" style="left:951.2px;width:300px;text-align:right;top:424.97px;font-size:10.2px;color:#1e1e1e;font-weight:normal;">-17,19</div>
<div class="t" style="left:-139.75px;width:300px;text-align:center;top:441.97px;font-size:10.2px;color:#555;font-weight:normal;">20</div>
<div class="t" style="left:22.5px;top:440.69px;font-size:11px;color:#1e1e1e;font-weight:normal;">А фазн</div>
<div class="t" style="left:-72.1px;width:300px;text-align:right;top:440.97px;font-size:10.2px;color:#1e1e1e;font-weight:normal;">0</div>
<div class="t" style="left:-20.935000000000002px;width:300px;text-align:right;top:440.97px;font-size:10.2px;color:#1e1e1e;font-weight:normal;">4,166667</div>
<div class="t" style="left:30.230000000000018px;width:300px;text-align:right;top:440.97px;font-size:10.2px;color:#1e1e1e;font-weight:normal;">8,333333</div>
<div class="t" style="left:81.39499999999998px;width:300px;text-align:right;top:440.97px;font-size:10.2px;color:#1e1e1e;font-weight:normal;">12,5</div>
<div class="t" style="left:132.56px;width:300px;text-align:right;top:440.97px;font-size:10.2px;color:#1e1e1e;font-weight:normal;">16,66667</div>
<div class="t" style="left:183.72500000000002px;width:300px;text-align:right;top:440.97px;font-size:10.2px;color:#1e1e1e;font-weight:normal;">20,83333</div>
<div class="t" style="left:234.89px;width:300px;text-align:right;top:440.97px;font-size:10.2px;color:#1e1e1e;font-weight:normal;">25</div>
<div class="t" style="left:286.05499999999995px;width:300px;text-align:right;top:440.97px;font-size:10.2px;color:#1e1e1e;font-weight:normal;">29,16667</div>
<div class="t" style="left:337.22px;width:300px;text-align:right;top:440.97px;font-size:10.2px;color:#1e1e1e;font-weight:normal;">33,33333</div>
<div class="t" style="left:388.385px;width:300px;text-align:right;top:440.97px;font-size:10.2px;color:#1e1e1e;font-weight:normal;">37,5</div>
<div class="t" style="left:439.54999999999995px;width:300px;text-align:right;top:440.97px;font-size:10.2px;color:#1e1e1e;font-weight:normal;">41,66667</div>
<div class="t" style="left:490.7149999999999px;width:300px;text-align:right;top:440.97px;font-size:10.2px;color:#1e1e1e;font-weight:normal;">45,83333</div>
<div class="t" style="left:541.88px;width:300px;text-align:right;top:440.97px;font-size:10.2px;color:#1e1e1e;font-weight:normal;">50</div>
<div class="t" style="left:593.045px;width:300px;text-align:right;top:440.97px;font-size:10.2px;color:#1e1e1e;font-weight:normal;">54,16667</div>
<div class="t" style="left:644.2099999999999px;width:300px;text-align:right;top:440.97px;font-size:10.2px;color:#1e1e1e;font-weight:normal;">58,33333</div>
<div class="t" style="left:695.375px;width:300px;text-align:right;top:440.97px;font-size:10.2px;color:#1e1e1e;font-weight:normal;">62,5</div>
<div class="t" style="left:746.54px;width:300px;text-align:right;top:440.97px;font-size:10.2px;color:#1e1e1e;font-weight:normal;">66,66667</div>
<div class="t" style="left:797.7049999999999px;width:300px;text-align:right;top:440.97px;font-size:10.2px;color:#1e1e1e;font-weight:normal;">70,83333</div>
<div class="t" style="left:848.8700000000001px;width:300px;text-align:right;top:440.97px;font-size:10.2px;color:#1e1e1e;font-weight:normal;">75</div>
<div class="t" style="left:900.0350000000001px;width:300px;text-align:right;top:440.97px;font-size:10.2px;color:#1e1e1e;font-weight:normal;">79,16667</div>
<div class="t" style="left:951.2px;width:300px;text-align:right;top:440.97px;font-size:10.2px;color:#1e1e1e;font-weight:normal;">83,33333</div>
<div class="t" style="left:-139.75px;width:300px;text-align:center;top:457.97px;font-size:10.2px;color:#555;font-weight:normal;">21</div>
<div class="t" style="left:22.5px;top:456.69px;font-size:11px;color:#1e1e1e;font-weight:normal;">RPM на валу</div>
<div class="t" style="left:-72.1px;width:300px;text-align:right;top:456.97px;font-size:10.2px;color:#1e1e1e;font-weight:normal;">0</div>
<div class="t" style="left:-20.935000000000002px;width:300px;text-align:right;top:456.97px;font-size:10.2px;color:#1e1e1e;font-weight:normal;">313,0917</div>
<div class="t" style="left:30.230000000000018px;width:300px;text-align:right;top:456.97px;font-size:10.2px;color:#1e1e1e;font-weight:normal;">626,1834</div>
<div class="t" style="left:81.39499999999998px;width:300px;text-align:right;top:456.97px;font-size:10.2px;color:#1e1e1e;font-weight:normal;">939,2751</div>
<div class="t" style="left:132.56px;width:300px;text-align:right;top:456.97px;font-size:10.2px;color:#1e1e1e;font-weight:normal;">1252,367</div>
<div class="t" style="left:183.72500000000002px;width:300px;text-align:right;top:456.97px;font-size:10.2px;color:#1e1e1e;font-weight:normal;">1565,458</div>
<div class="t" style="left:234.89px;width:300px;text-align:right;top:456.97px;font-size:10.2px;color:#1e1e1e;font-weight:normal;">1878,55</div>
<div class="t" style="left:286.05499999999995px;width:300px;text-align:right;top:456.97px;font-size:10.2px;color:#1e1e1e;font-weight:normal;">2191,642</div>
<div class="t" style="left:337.22px;width:300px;text-align:right;top:456.97px;font-size:10.2px;color:#1e1e1e;font-weight:normal;">2504,734</div>
<div class="t" style="left:388.385px;width:300px;text-align:right;top:456.97px;font-size:10.2px;color:#1e1e1e;font-weight:normal;">2817,825</div>
<div class="t" style="left:439.54999999999995px;width:300px;text-align:right;top:456.97px;font-size:10.2px;color:#1e1e1e;font-weight:normal;">3130,917</div>
<div class="t" style="left:490.7149999999999px;width:300px;text-align:right;top:456.97px;font-size:10.2px;color:#1e1e1e;font-weight:normal;">3444,009</div>
<div class="t" style="left:541.88px;width:300px;text-align:right;top:456.97px;font-size:10.2px;color:#1e1e1e;font-weight:normal;">3757,1</div>
<div class="t" style="left:593.045px;width:300px;text-align:right;top:456.97px;font-size:10.2px;color:#1e1e1e;font-weight:normal;">4070,192</div>
<div class="t" style="left:644.2099999999999px;width:300px;text-align:right;top:456.97px;font-size:10.2px;color:#1e1e1e;font-weight:normal;">4383,284</div>
<div class="t" style="left:695.375px;width:300px;text-align:right;top:456.97px;font-size:10.2px;color:#1e1e1e;font-weight:normal;">4696,375</div>
<div class="t" style="left:746.54px;width:300px;text-align:right;top:456.97px;font-size:10.2px;color:#1e1e1e;font-weight:normal;">5009,467</div>
<div class="t" style="left:797.7049999999999px;width:300px;text-align:right;top:456.97px;font-size:10.2px;color:#1e1e1e;font-weight:normal;">5322,559</div>
<div class="t" style="left:848.8700000000001px;width:300px;text-align:right;top:456.97px;font-size:10.2px;color:#1e1e1e;font-weight:normal;">5635,65</div>
<div class="t" style="left:900.0350000000001px;width:300px;text-align:right;top:456.97px;font-size:10.2px;color:#1e1e1e;font-weight:normal;">5948,742</div>
<div class="t" style="left:951.2px;width:300px;text-align:right;top:456.97px;font-size:10.2px;color:#1e1e1e;font-weight:normal;">6261,834</div>
<div class="t" style="left:1002.365px;width:300px;text-align:right;top:456.97px;font-size:10.2px;color:#1e1e1e;font-weight:normal;">6574,926</div>
<div class="t" style="left:-139.75px;width:300px;text-align:center;top:473.97px;font-size:10.2px;color:#555;font-weight:normal;">22</div>
<div class="t" style="left:22.5px;top:472.69px;font-size:11px;color:#1e1e1e;font-weight:normal;">Мощность</div>
<div class="t" style="left:-72.1px;width:300px;text-align:right;top:472.97px;font-size:10.2px;color:#1e1e1e;font-weight:normal;">0</div>
<div class="t" style="left:-20.935000000000002px;width:300px;text-align:right;top:472.97px;font-size:10.2px;color:#1e1e1e;font-weight:normal;">100</div>
<div class="t" style="left:30.230000000000018px;width:300px;text-align:right;top:472.97px;font-size:10.2px;color:#1e1e1e;font-weight:normal;">200</div>
<div class="t" style="left:81.39499999999998px;width:300px;text-align:right;top:472.97px;font-size:10.2px;color:#1e1e1e;font-weight:normal;">300</div>
<div class="t" style="left:132.56px;width:300px;text-align:right;top:472.97px;font-size:10.2px;color:#1e1e1e;font-weight:normal;">400</div>
<div class="t" style="left:183.72500000000002px;width:300px;text-align:right;top:472.97px;font-size:10.2px;color:#1e1e1e;font-weight:normal;">500</div>
<div class="t" style="left:234.89px;width:300px;text-align:right;top:472.97px;font-size:10.2px;color:#1e1e1e;font-weight:normal;">600</div>
<div class="t" style="left:286.05499999999995px;width:300px;text-align:right;top:472.97px;font-size:10.2px;color:#1e1e1e;font-weight:normal;">700</div>
<div class="t" style="left:337.22px;width:300px;text-align:right;top:472.97px;font-size:10.2px;color:#1e1e1e;font-weight:normal;">800</div>
<div class="t" style="left:388.385px;width:300px;text-align:right;top:472.97px;font-size:10.2px;color:#1e1e1e;font-weight:normal;">900</div>
<div class="t" style="left:439.54999999999995px;width:300px;text-align:right;top:472.97px;font-size:10.2px;color:#1e1e1e;font-weight:normal;">1000</div>
<div class="t" style="left:490.7149999999999px;width:300px;text-align:right;top:472.97px;font-size:10.2px;color:#1e1e1e;font-weight:normal;">1100</div>
<div class="t" style="left:541.88px;width:300px;text-align:right;top:472.97px;font-size:10.2px;color:#1e1e1e;font-weight:normal;">1200</div>
<div class="t" style="left:593.045px;width:300px;text-align:right;top:472.97px;font-size:10.2px;color:#1e1e1e;font-weight:normal;">1300</div>
<div class="t" style="left:644.2099999999999px;width:300px;text-align:right;top:472.97px;font-size:10.2px;color:#1e1e1e;font-weight:normal;">1400</div>
<div class="t" style="left:695.375px;width:300px;text-align:right;top:472.97px;font-size:10.2px;color:#1e1e1e;font-weight:normal;">1500</div>
<div class="t" style="left:746.54px;width:300px;text-align:right;top:472.97px;font-size:10.2px;color:#1e1e1e;font-weight:normal;">1600</div>
<div class="t" style="left:797.7049999999999px;width:300px;text-align:right;top:472.97px;font-size:10.2px;color:#1e1e1e;font-weight:normal;">1700</div>
<div class="t" style="left:848.8700000000001px;width:300px;text-align:right;top:472.97px;font-size:10.2px;color:#1e1e1e;font-weight:normal;">1800</div>
<div class="t" style="left:900.0350000000001px;width:300px;text-align:right;top:472.97px;font-size:10.2px;color:#1e1e1e;font-weight:normal;">1900</div>
<div class="t" style="left:951.2px;width:300px;text-align:right;top:472.97px;font-size:10.2px;color:#1e1e1e;font-weight:normal;">2000</div>
<div class="t" style="left:-139.75px;width:300px;text-align:center;top:489.97px;font-size:10.2px;color:#555;font-weight:normal;">23</div>
<div class="t" style="left:22.5px;top:488.69px;font-size:11px;color:#1e1e1e;font-weight:normal;">Скорость/ХВт (кмч/100вт)</div>
<div class="t" style="left:-72.1px;width:300px;text-align:right;top:488.97px;font-size:10.2px;color:#1e1e1e;font-weight:normal;">0</div>
<div class="t" style="left:-20.935000000000002px;width:300px;text-align:right;top:488.97px;font-size:10.2px;color:#1e1e1e;font-weight:normal;">20,66795</div>
<div class="t" style="left:30.230000000000018px;width:300px;text-align:right;top:488.97px;font-size:10.2px;color:#1e1e1e;font-weight:normal;">27,15684</div>
<div class="t" style="left:81.39499999999998px;width:300px;text-align:right;top:488.97px;font-size:10.2px;color:#1e1e1e;font-weight:normal;">31,60472</div>
<div class="t" style="left:132.56px;width:300px;text-align:right;top:488.97px;font-size:10.2px;color:#1e1e1e;font-weight:normal;">35,10648</div>
<div class="t" style="left:183.72500000000002px;width:300px;text-align:right;top:488.97px;font-size:10.2px;color:#1e1e1e;font-weight:normal;">38,04353</div>
<div class="t" style="left:234.89px;width:300px;text-align:right;top:488.97px;font-size:10.2px;color:#1e1e1e;font-weight:normal;">40,59888</div>
<div class="t" style="left:286.05499999999995px;width:300px;text-align:right;top:488.97px;font-size:10.2px;color:#1e1e1e;font-weight:normal;">42,87606</div>
<div class="t" style="left:337.22px;width:300px;text-align:right;top:488.97px;font-size:10.2px;color:#1e1e1e;font-weight:normal;">44,93996</div>
<div class="t" style="left:388.385px;width:300px;text-align:right;top:488.97px;font-size:10.2px;color:#1e1e1e;font-weight:normal;">46,83424</div>
<div class="t" style="left:439.54999999999995px;width:300px;text-align:right;top:488.97px;font-size:10.2px;color:#1e1e1e;font-weight:normal;">48,58983</div>
<div class="t" style="left:490.7149999999999px;width:300px;text-align:right;top:488.97px;font-size:10.2px;color:#1e1e1e;font-weight:normal;">50,22953</div>
<div class="t" style="left:541.88px;width:300px;text-align:right;top:488.97px;font-size:10.2px;color:#1e1e1e;font-weight:normal;">51,77069</div>
<div class="t" style="left:593.045px;width:300px;text-align:right;top:488.97px;font-size:10.2px;color:#1e1e1e;font-weight:normal;">53,22686</div>
<div class="t" style="left:644.2099999999999px;width:300px;text-align:right;top:488.97px;font-size:10.2px;color:#1e1e1e;font-weight:normal;">54,60882</div>
<div class="t" style="left:695.375px;width:300px;text-align:right;top:488.97px;font-size:10.2px;color:#1e1e1e;font-weight:normal;">55,92533</div>
<div class="t" style="left:746.54px;width:300px;text-align:right;top:488.97px;font-size:10.2px;color:#1e1e1e;font-weight:normal;">57,18361</div>
<div class="t" style="left:797.7049999999999px;width:300px;text-align:right;top:488.97px;font-size:10.2px;color:#1e1e1e;font-weight:normal;">58,38968</div>
<div class="t" style="left:848.8700000000001px;width:300px;text-align:right;top:488.97px;font-size:10.2px;color:#1e1e1e;font-weight:normal;">59,54862</div>
<div class="t" style="left:900.0350000000001px;width:300px;text-align:right;top:488.97px;font-size:10.2px;color:#1e1e1e;font-weight:normal;">60,66478</div>
<div class="t" style="left:951.2px;width:300px;text-align:right;top:488.97px;font-size:10.2px;color:#1e1e1e;font-weight:normal;">61,74188</div>
<div class="t" style="left:1002.365px;width:300px;text-align:right;top:488.97px;font-size:10.2px;color:#1e1e1e;font-weight:normal;">62,79547</div>
<div class="t" style="left:-139.75px;width:300px;text-align:center;top:505.97px;font-size:10.2px;color:#555;font-weight:normal;">24</div>
<div class="t" style="left:22.5px;top:504.69px;font-size:11px;color:#1e1e1e;font-weight:normal;">Сопротивление воздуха, Вт</div>
<div class="t" style="left:-72.1px;width:300px;text-align:right;top:504.97px;font-size:10.2px;color:#1e1e1e;font-weight:normal;">0</div>
<div class="t" style="left:-20.935000000000002px;width:300px;text-align:right;top:504.97px;font-size:10.2px;color:#1e1e1e;font-weight:normal;">1,017554</div>
<div class="t" style="left:30.230000000000018px;width:300px;text-align:right;top:504.97px;font-size:10.2px;color:#1e1e1e;font-weight:normal;">8,140432</div>
<div class="t" style="left:81.39499999999998px;width:300px;text-align:right;top:504.97px;font-size:10.2px;color:#1e1e1e;font-weight:normal;">27,47396</div>
<div class="t" style="left:132.56px;width:300px;text-align:right;top:504.97px;font-size:10.2px;color:#1e1e1e;font-weight:normal;">65,12346</div>
<div class="t" style="left:183.72500000000002px;width:300px;text-align:right;top:504.97px;font-size:10.2px;color:#1e1e1e;font-weight:normal;">127,1943</div>
<div class="t" style="left:234.89px;width:300px;text-align:right;top:504.97px;font-size:10.2px;color:#1e1e1e;font-weight:normal;">219,7917</div>
<div class="t" style="left:286.05499999999995px;width:300px;text-align:right;top:504.97px;font-size:10.2px;color:#1e1e1e;font-weight:normal;">349,021</div>
<div class="t" style="left:337.22px;width:300px;text-align:right;top:504.97px;font-size:10.2px;color:#1e1e1e;font-weight:normal;">520,9877</div>
<div class="t" style="left:388.385px;width:300px;text-align:right;top:504.97px;font-size:10.2px;color:#1e1e1e;font-weight:normal;">741,7969</div>
<div class="t" style="left:439.54999999999995px;width:300px;text-align:right;top:504.97px;font-size:10.2px;color:#1e1e1e;font-weight:normal;">1017,554</div>
<div class="t" style="left:490.7149999999999px;width:300px;text-align:right;top:504.97px;font-size:10.2px;color:#1e1e1e;font-weight:normal;">1354,364</div>
<div class="t" style="left:541.88px;width:300px;text-align:right;top:504.97px;font-size:10.2px;color:#1e1e1e;font-weight:normal;">1758,333</div>
<div class="t" style="left:593.045px;width:300px;text-align:right;top:504.97px;font-size:10.2px;color:#1e1e1e;font-weight:normal;">2235,566</div>
<div class="t" style="left:644.2099999999999px;width:300px;text-align:right;top:504.97px;font-size:10.2px;color:#1e1e1e;font-weight:normal;">2792,168</div>
<div class="t" style="left:695.375px;width:300px;text-align:right;top:504.97px;font-size:10.2px;color:#1e1e1e;font-weight:normal;">3434,245</div>
<div class="t" style="left:746.54px;width:300px;text-align:right;top:504.97px;font-size:10.2px;color:#1e1e1e;font-weight:normal;">4167,901</div>
<div class="t" style="left:797.7049999999999px;width:300px;text-align:right;top:504.97px;font-size:10.2px;color:#1e1e1e;font-weight:normal;">4999,243</div>
<div class="t" style="left:848.8700000000001px;width:300px;text-align:right;top:504.97px;font-size:10.2px;color:#1e1e1e;font-weight:normal;">5934,375</div>
<div class="t" style="left:900.0350000000001px;width:300px;text-align:right;top:504.97px;font-size:10.2px;color:#1e1e1e;font-weight:normal;">6979,403</div>
<div class="t" style="left:951.2px;width:300px;text-align:right;top:504.97px;font-size:10.2px;color:#1e1e1e;font-weight:normal;">8140,432</div>
<div class="t" style="left:1002.365px;width:300px;text-align:right;top:504.97px;font-size:10.2px;color:#1e1e1e;font-weight:normal;">9402,305</div>
<div class="t" style="left:-139.75px;width:300px;text-align:center;top:523.47px;font-size:10.2px;color:#217346;font-weight:bold;">25</div>
<div class="t" style="left:22.5px;top:522.19px;font-size:11px;color:#1e1e1e;font-weight:normal;">Сопротивление качению, Вт</div>
<div class="t" style="left:-72.1px;width:300px;text-align:right;top:522.47px;font-size:10.2px;color:#1e1e1e;font-weight:normal;">0</div>
<div class="t" style="left:-20.935000000000002px;width:300px;text-align:right;top:522.47px;font-size:10.2px;color:#1e1e1e;font-weight:normal;">0,054444</div>
<div class="t" style="left:30.230000000000018px;width:300px;text-align:right;top:522.47px;font-size:10.2px;color:#1e1e1e;font-weight:normal;">0,108889</div>
<div class="t" style="left:81.39499999999998px;width:300px;text-align:right;top:522.47px;font-size:10.2px;color:#1e1e1e;font-weight:normal;">0,163333</div>
<div class="t" style="left:132.56px;width:300px;text-align:right;top:522.47px;font-size:10.2px;color:#1e1e1e;font-weight:normal;">0,217778</div>
<div class="t" style="left:183.72500000000002px;width:300px;text-align:right;top:522.47px;font-size:10.2px;color:#1e1e1e;font-weight:normal;">0,272222</div>
<div class="t" style="left:234.89px;width:300px;text-align:right;top:522.47px;font-size:10.2px;color:#1e1e1e;font-weight:normal;">0,326667</div>
<div class="t" style="left:286.05499999999995px;width:300px;text-align:right;top:522.47px;font-size:10.2px;color:#1e1e1e;font-weight:normal;">0,381111</div>
<div class="t" style="left:337.22px;width:300px;text-align:right;top:522.47px;font-size:10.2px;color:#1e1e1e;font-weight:normal;">0,435556</div>
<div class="t" style="left:388.385px;width:300px;text-align:right;top:522.47px;font-size:10.2px;color:#1e1e1e;font-weight:normal;">0,49</div>
<div class="t" style="left:439.54999999999995px;width:300px;text-align:right;top:522.47px;font-size:10.2px;color:#1e1e1e;font-weight:normal;">0,544444</div>
<div class="t" style="left:490.7149999999999px;width:300px;text-align:right;top:522.47px;font-size:10.2px;color:#1e1e1e;font-weight:normal;">0,598889</div>
<div class="t" style="left:541.88px;width:300px;text-align:right;top:522.47px;font-size:10.2px;color:#1e1e1e;font-weight:normal;">0,653333</div>
<div class="t" style="left:593.045px;width:300px;text-align:right;top:522.47px;font-size:10.2px;color:#1e1e1e;font-weight:normal;">0,707778</div>
<div class="t" style="left:644.2099999999999px;width:300px;text-align:right;top:522.47px;font-size:10.2px;color:#1e1e1e;font-weight:normal;">0,762222</div>
<div class="t" style="left:695.375px;width:300px;text-align:right;top:522.47px;font-size:10.2px;color:#1e1e1e;font-weight:normal;">0,816667</div>
<div class="t" style="left:746.54px;width:300px;text-align:right;top:522.47px;font-size:10.2px;color:#1e1e1e;font-weight:normal;">0,871111</div>
<div class="t" style="left:797.7049999999999px;width:300px;text-align:right;top:522.47px;font-size:10.2px;color:#1e1e1e;font-weight:normal;">0,925556</div>
<div class="t" style="left:848.8700000000001px;width:300px;text-align:right;top:522.47px;font-size:10.2px;color:#1e1e1e;font-weight:normal;">0,98</div>
<div class="t" style="left:900.0350000000001px;width:300px;text-align:right;top:522.47px;font-size:10.2px;color:#1e1e1e;font-weight:normal;">1,034444</div>
<div class="t" style="left:951.2px;width:300px;text-align:right;top:522.47px;font-size:10.2px;color:#1e1e1e;font-weight:normal;">1,088889</div>
<div class="t" style="left:1002.365px;width:300px;text-align:right;top:522.47px;font-size:10.2px;color:#1e1e1e;font-weight:normal;">1,143333</div>
<div class="t" style="left:-139.75px;width:300px;text-align:center;top:540.17px;font-size:10.2px;color:#555;font-weight:normal;">26</div>
<div class="t" style="left:22.5px;top:538.89px;font-size:11px;color:#1e1e1e;font-weight:normal;">Сопротивление воздуха, Нм</div>
<div class="t" style="left:-20.935000000000002px;width:300px;text-align:right;top:539.17px;font-size:10.2px;color:#1e1e1e;font-weight:normal;">0,223471</div>
<div class="t" style="left:30.230000000000018px;width:300px;text-align:right;top:539.17px;font-size:10.2px;color:#1e1e1e;font-weight:normal;">0,893885</div>
<div class="t" style="left:81.39499999999998px;width:300px;text-align:right;top:539.17px;font-size:10.2px;color:#1e1e1e;font-weight:normal;">2,011242</div>
<div class="t" style="left:132.56px;width:300px;text-align:right;top:539.17px;font-size:10.2px;color:#1e1e1e;font-weight:normal;">3,575541</div>
<div class="t" style="left:183.72500000000002px;width:300px;text-align:right;top:539.17px;font-size:10.2px;color:#1e1e1e;font-weight:normal;">5,586783</div>
<div class="t" style="left:234.89px;width:300px;text-align:right;top:539.17px;font-size:10.2px;color:#1e1e1e;font-weight:normal;">8,044968</div>
<div class="t" style="left:286.05499999999995px;width:300px;text-align:right;top:539.17px;font-size:10.2px;color:#1e1e1e;font-weight:normal;">10,95009</div>
<div class="t" style="left:337.22px;width:300px;text-align:right;top:539.17px;font-size:10.2px;color:#1e1e1e;font-weight:normal;">14,30216</div>
<div class="t" style="left:388.385px;width:300px;text-align:right;top:539.17px;font-size:10.2px;color:#1e1e1e;font-weight:normal;">18,10118</div>
<div class="t" style="left:439.54999999999995px;width:300px;text-align:right;top:539.17px;font-size:10.2px;color:#1e1e1e;font-weight:normal;">22,34713</div>
<div class="t" style="left:490.7149999999999px;width:300px;text-align:right;top:539.17px;font-size:10.2px;color:#1e1e1e;font-weight:normal;">27,04003</div>
<div class="t" style="left:541.88px;width:300px;text-align:right;top:539.17px;font-size:10.2px;color:#1e1e1e;font-weight:normal;">32,17987</div>
<div class="t" style="left:593.045px;width:300px;text-align:right;top:539.17px;font-size:10.2px;color:#1e1e1e;font-weight:normal;">37,76665</div>
<div class="t" style="left:644.2099999999999px;width:300px;text-align:right;top:539.17px;font-size:10.2px;color:#1e1e1e;font-weight:normal;">43,80038</div>
<div class="t" style="left:695.375px;width:300px;text-align:right;top:539.17px;font-size:10.2px;color:#1e1e1e;font-weight:normal;">50,28105</div>
<div class="t" style="left:746.54px;width:300px;text-align:right;top:539.17px;font-size:10.2px;color:#1e1e1e;font-weight:normal;">57,20866</div>
<div class="t" style="left:797.7049999999999px;width:300px;text-align:right;top:539.17px;font-size:10.2px;color:#1e1e1e;font-weight:normal;">64,58321</div>
<div class="t" style="left:848.8700000000001px;width:300px;text-align:right;top:539.17px;font-size:10.2px;color:#1e1e1e;font-weight:normal;">72,40471</div>
<div class="t" style="left:900.0350000000001px;width:300px;text-align:right;top:539.17px;font-size:10.2px;color:#1e1e1e;font-weight:normal;">80,67315</div>
<div class="t" style="left:951.2px;width:300px;text-align:right;top:539.17px;font-size:10.2px;color:#1e1e1e;font-weight:normal;">89,38853</div>
<div class="t" style="left:-139.75px;width:300px;text-align:center;top:556.17px;font-size:10.2px;color:#555;font-weight:normal;">27</div>
<div class="t" style="left:22.5px;top:554.89px;font-size:11px;color:#1e1e1e;font-weight:normal;">Сопротивление качению, Нм</div>
<div class="t" style="left:-20.935000000000002px;width:300px;text-align:right;top:555.17px;font-size:10.2px;color:#1e1e1e;font-weight:normal;">0,049078</div>
<div class="t" style="left:30.230000000000018px;width:300px;text-align:right;top:555.17px;font-size:10.2px;color:#1e1e1e;font-weight:normal;">0,098156</div>
<div class="t" style="left:81.39499999999998px;width:300px;text-align:right;top:555.17px;font-size:10.2px;color:#1e1e1e;font-weight:normal;">0,147234</div>
<div class="t" style="left:132.56px;width:300px;text-align:right;top:555.17px;font-size:10.2px;color:#1e1e1e;font-weight:normal;">0,196312</div>
<div class="t" style="left:183.72500000000002px;width:300px;text-align:right;top:555.17px;font-size:10.2px;color:#1e1e1e;font-weight:normal;">0,24539</div>
<div class="t" style="left:234.89px;width:300px;text-align:right;top:555.17px;font-size:10.2px;color:#1e1e1e;font-weight:normal;">0,294468</div>
<div class="t" style="left:286.05499999999995px;width:300px;text-align:right;top:555.17px;font-size:10.2px;color:#1e1e1e;font-weight:normal;">0,343545</div>
<div class="t" style="left:337.22px;width:300px;text-align:right;top:555.17px;font-size:10.2px;color:#1e1e1e;font-weight:normal;">0,392623</div>
<div class="t" style="left:388.385px;width:300px;text-align:right;top:555.17px;font-size:10.2px;color:#1e1e1e;font-weight:normal;">0,441701</div>
<div class="t" style="left:439.54999999999995px;width:300px;text-align:right;top:555.17px;font-size:10.2px;color:#1e1e1e;font-weight:normal;">0,490779</div>
<div class="t" style="left:490.7149999999999px;width:300px;text-align:right;top:555.17px;font-size:10.2px;color:#1e1e1e;font-weight:normal;">0,539857</div>
<div class="t" style="left:541.88px;width:300px;text-align:right;top:555.17px;font-size:10.2px;color:#1e1e1e;font-weight:normal;">0,588935</div>
<div class="t" style="left:593.045px;width:300px;text-align:right;top:555.17px;font-size:10.2px;color:#1e1e1e;font-weight:normal;">0,638013</div>
<div class="t" style="left:644.2099999999999px;width:300px;text-align:right;top:555.17px;font-size:10.2px;color:#1e1e1e;font-weight:normal;">0,687091</div>
<div class="t" style="left:695.375px;width:300px;text-align:right;top:555.17px;font-size:10.2px;color:#1e1e1e;font-weight:normal;">0,736169</div>
<div class="t" style="left:746.54px;width:300px;text-align:right;top:555.17px;font-size:10.2px;color:#1e1e1e;font-weight:normal;">0,785247</div>
<div class="t" style="left:797.7049999999999px;width:300px;text-align:right;top:555.17px;font-size:10.2px;color:#1e1e1e;font-weight:normal;">0,834325</div>
<div class="t" style="left:848.8700000000001px;width:300px;text-align:right;top:555.17px;font-size:10.2px;color:#1e1e1e;font-weight:normal;">0,883403</div>
<div class="t" style="left:900.0350000000001px;width:300px;text-align:right;top:555.17px;font-size:10.2px;color:#1e1e1e;font-weight:normal;">0,93248</div>
<div class="t" style="left:951.2px;width:300px;text-align:right;top:555.17px;font-size:10.2px;color:#1e1e1e;font-weight:normal;">0,981558</div>
<div class="t" style="left:1002.365px;width:300px;text-align:right;top:555.17px;font-size:10.2px;color:#1e1e1e;font-weight:normal;">1,030636</div>
<div class="t" style="left:-139.75px;width:300px;text-align:center;top:572.17px;font-size:10.2px;color:#555;font-weight:normal;">28</div>
<div class="t" style="left:22.5px;top:571.03px;font-size:10.6px;color:#1e1e1e;font-weight:bold;letter-spacing:-0.28px;-webkit-text-stroke:0">Скорость</div>
<div class="t" style="left:-72.1px;width:300px;text-align:right;top:571.10px;font-size:10.4px;color:#1e1e1e;font-weight:bold;letter-spacing:-0.28px;-webkit-text-stroke:0">0</div>
<div class="t" style="left:-20.935000000000002px;width:300px;text-align:right;top:571.10px;font-size:10.4px;color:#1e1e1e;font-weight:bold;letter-spacing:-0.28px;-webkit-text-stroke:0">5</div>
<div class="t" style="left:30.230000000000018px;width:300px;text-align:right;top:571.10px;font-size:10.4px;color:#1e1e1e;font-weight:bold;letter-spacing:-0.28px;-webkit-text-stroke:0">10</div>
<div class="t" style="left:81.39499999999998px;width:300px;text-align:right;top:571.10px;font-size:10.4px;color:#1e1e1e;font-weight:bold;letter-spacing:-0.28px;-webkit-text-stroke:0">15</div>
<div class="t" style="left:132.56px;width:300px;text-align:right;top:571.10px;font-size:10.4px;color:#1e1e1e;font-weight:bold;letter-spacing:-0.28px;-webkit-text-stroke:0">20</div>
<div class="t" style="left:183.72500000000002px;width:300px;text-align:right;top:571.10px;font-size:10.4px;color:#1e1e1e;font-weight:bold;letter-spacing:-0.28px;-webkit-text-stroke:0">25</div>
<div class="t" style="left:234.89px;width:300px;text-align:right;top:571.10px;font-size:10.4px;color:#1e1e1e;font-weight:bold;letter-spacing:-0.28px;-webkit-text-stroke:0">30</div>
<div class="t" style="left:286.05499999999995px;width:300px;text-align:right;top:571.10px;font-size:10.4px;color:#1e1e1e;font-weight:bold;letter-spacing:-0.28px;-webkit-text-stroke:0">35</div>
<div class="t" style="left:337.22px;width:300px;text-align:right;top:571.10px;font-size:10.4px;color:#1e1e1e;font-weight:bold;letter-spacing:-0.28px;-webkit-text-stroke:0">40</div>
<div class="t" style="left:388.385px;width:300px;text-align:right;top:571.10px;font-size:10.4px;color:#1e1e1e;font-weight:bold;letter-spacing:-0.28px;-webkit-text-stroke:0">45</div>
<div class="t" style="left:439.54999999999995px;width:300px;text-align:right;top:571.10px;font-size:10.4px;color:#1e1e1e;font-weight:bold;letter-spacing:-0.28px;-webkit-text-stroke:0">50</div>
<div class="t" style="left:490.7149999999999px;width:300px;text-align:right;top:571.10px;font-size:10.4px;color:#1e1e1e;font-weight:bold;letter-spacing:-0.28px;-webkit-text-stroke:0">55</div>
<div class="t" style="left:541.88px;width:300px;text-align:right;top:571.10px;font-size:10.4px;color:#1e1e1e;font-weight:bold;letter-spacing:-0.28px;-webkit-text-stroke:0">60</div>
<div class="t" style="left:593.045px;width:300px;text-align:right;top:571.10px;font-size:10.4px;color:#1e1e1e;font-weight:bold;letter-spacing:-0.28px;-webkit-text-stroke:0">65</div>
<div class="t" style="left:644.2099999999999px;width:300px;text-align:right;top:571.10px;font-size:10.4px;color:#1e1e1e;font-weight:bold;letter-spacing:-0.28px;-webkit-text-stroke:0">70</div>
<div class="t" style="left:695.375px;width:300px;text-align:right;top:571.10px;font-size:10.4px;color:#1e1e1e;font-weight:bold;letter-spacing:-0.28px;-webkit-text-stroke:0">75</div>
<div class="t" style="left:746.54px;width:300px;text-align:right;top:571.10px;font-size:10.4px;color:#1e1e1e;font-weight:bold;letter-spacing:-0.28px;-webkit-text-stroke:0">80</div>
<div class="t" style="left:797.7049999999999px;width:300px;text-align:right;top:571.10px;font-size:10.4px;color:#1e1e1e;font-weight:bold;letter-spacing:-0.28px;-webkit-text-stroke:0">85</div>
<div class="t" style="left:848.8700000000001px;width:300px;text-align:right;top:571.10px;font-size:10.4px;color:#1e1e1e;font-weight:bold;letter-spacing:-0.28px;-webkit-text-stroke:0">90</div>
<div class="t" style="left:900.0350000000001px;width:300px;text-align:right;top:571.10px;font-size:10.4px;color:#1e1e1e;font-weight:bold;letter-spacing:-0.28px;-webkit-text-stroke:0">95</div>
<div class="t" style="left:951.2px;width:300px;text-align:right;top:571.10px;font-size:10.4px;color:#1e1e1e;font-weight:bold;letter-spacing:-0.28px;-webkit-text-stroke:0">100</div>
<div class="t" style="left:-139.75px;width:300px;text-align:center;top:588.17px;font-size:10.2px;color:#555;font-weight:normal;">29</div>
<div class="t" style="left:22.5px;top:587.03px;font-size:10.6px;color:#1e1e1e;font-weight:bold;letter-spacing:-0.28px;-webkit-text-stroke:0">RPM</div>
<div class="t" style="left:-72.1px;width:300px;text-align:right;top:587.10px;font-size:10.4px;color:#1e1e1e;font-weight:bold;letter-spacing:-0.28px;-webkit-text-stroke:0">0</div>
<div class="t" style="left:-20.935000000000002px;width:300px;text-align:right;top:587.10px;font-size:10.4px;color:#1e1e1e;font-weight:bold;letter-spacing:-0.28px;-webkit-text-stroke:0">44</div>
<div class="t" style="left:30.230000000000018px;width:300px;text-align:right;top:587.10px;font-size:10.4px;color:#1e1e1e;font-weight:bold;letter-spacing:-0.28px;-webkit-text-stroke:0">87</div>
<div class="t" style="left:81.39499999999998px;width:300px;text-align:right;top:587.10px;font-size:10.4px;color:#1e1e1e;font-weight:bold;letter-spacing:-0.28px;-webkit-text-stroke:0">131</div>
<div class="t" style="left:132.56px;width:300px;text-align:right;top:587.10px;font-size:10.4px;color:#1e1e1e;font-weight:bold;letter-spacing:-0.28px;-webkit-text-stroke:0">174</div>
<div class="t" style="left:183.72500000000002px;width:300px;text-align:right;top:587.10px;font-size:10.4px;color:#1e1e1e;font-weight:bold;letter-spacing:-0.28px;-webkit-text-stroke:0">218</div>
<div class="t" style="left:234.89px;width:300px;text-align:right;top:587.10px;font-size:10.4px;color:#1e1e1e;font-weight:bold;letter-spacing:-0.28px;-webkit-text-stroke:0">261</div>
<div class="t" style="left:286.05499999999995px;width:300px;text-align:right;top:587.10px;font-size:10.4px;color:#1e1e1e;font-weight:bold;letter-spacing:-0.28px;-webkit-text-stroke:0">305</div>
<div class="t" style="left:337.22px;width:300px;text-align:right;top:587.10px;font-size:10.4px;color:#1e1e1e;font-weight:bold;letter-spacing:-0.28px;-webkit-text-stroke:0">348</div>
<div class="t" style="left:388.385px;width:300px;text-align:right;top:587.10px;font-size:10.4px;color:#1e1e1e;font-weight:bold;letter-spacing:-0.28px;-webkit-text-stroke:0">392</div>
<div class="t" style="left:439.54999999999995px;width:300px;text-align:right;top:587.10px;font-size:10.4px;color:#1e1e1e;font-weight:bold;letter-spacing:-0.28px;-webkit-text-stroke:0">435</div>
<div class="t" style="left:490.7149999999999px;width:300px;text-align:right;top:587.10px;font-size:10.4px;color:#1e1e1e;font-weight:bold;letter-spacing:-0.28px;-webkit-text-stroke:0">479</div>
<div class="t" style="left:541.88px;width:300px;text-align:right;top:587.10px;font-size:10.4px;color:#1e1e1e;font-weight:bold;letter-spacing:-0.28px;-webkit-text-stroke:0">522</div>
<div class="t" style="left:593.045px;width:300px;text-align:right;top:587.10px;font-size:10.4px;color:#1e1e1e;font-weight:bold;letter-spacing:-0.28px;-webkit-text-stroke:0">566</div>
<div class="t" style="left:644.2099999999999px;width:300px;text-align:right;top:587.10px;font-size:10.4px;color:#1e1e1e;font-weight:bold;letter-spacing:-0.28px;-webkit-text-stroke:0">610</div>
<div class="t" style="left:695.375px;width:300px;text-align:right;top:587.10px;font-size:10.4px;color:#1e1e1e;font-weight:bold;letter-spacing:-0.28px;-webkit-text-stroke:0">653</div>
<div class="t" style="left:746.54px;width:300px;text-align:right;top:587.10px;font-size:10.4px;color:#1e1e1e;font-weight:bold;letter-spacing:-0.28px;-webkit-text-stroke:0">697</div>
<div class="t" style="left:797.7049999999999px;width:300px;text-align:right;top:587.10px;font-size:10.4px;color:#1e1e1e;font-weight:bold;letter-spacing:-0.28px;-webkit-text-stroke:0">740</div>
<div class="t" style="left:848.8700000000001px;width:300px;text-align:right;top:587.10px;font-size:10.4px;color:#1e1e1e;font-weight:bold;letter-spacing:-0.28px;-webkit-text-stroke:0">784</div>
<div class="t" style="left:900.0350000000001px;width:300px;text-align:right;top:587.10px;font-size:10.4px;color:#1e1e1e;font-weight:bold;letter-spacing:-0.28px;-webkit-text-stroke:0">827</div>
<div class="t" style="left:951.2px;width:300px;text-align:right;top:587.10px;font-size:10.4px;color:#1e1e1e;font-weight:bold;letter-spacing:-0.28px;-webkit-text-stroke:0">871</div>
<div class="t" style="left:-139.75px;width:300px;text-align:center;top:604.17px;font-size:10.2px;color:#555;font-weight:normal;">30</div>
<div class="t" style="left:22.5px;top:603.03px;font-size:10.6px;color:#1e1e1e;font-weight:bold;letter-spacing:-0.28px;-webkit-text-stroke:0">Сопротивление, Нм</div>
<div class="t" style="left:-72.1px;width:300px;text-align:right;top:603.10px;font-size:10.4px;color:#1e1e1e;font-weight:bold;letter-spacing:-0.28px;-webkit-text-stroke:0">0</div>
<div class="t" style="left:-20.935000000000002px;width:300px;text-align:right;top:603.10px;font-size:10.4px;color:#1e1e1e;font-weight:bold;letter-spacing:-0.28px;-webkit-text-stroke:0">0</div>
<div class="t" style="left:30.230000000000018px;width:300px;text-align:right;top:603.10px;font-size:10.4px;color:#1e1e1e;font-weight:bold;letter-spacing:-0.28px;-webkit-text-stroke:0">1</div>
<div class="t" style="left:81.39499999999998px;width:300px;text-align:right;top:603.10px;font-size:10.4px;color:#1e1e1e;font-weight:bold;letter-spacing:-0.28px;-webkit-text-stroke:0">2</div>
<div class="t" style="left:132.56px;width:300px;text-align:right;top:603.10px;font-size:10.4px;color:#1e1e1e;font-weight:bold;letter-spacing:-0.28px;-webkit-text-stroke:0">4</div>
<div class="t" style="left:183.72500000000002px;width:300px;text-align:right;top:603.10px;font-size:10.4px;color:#1e1e1e;font-weight:bold;letter-spacing:-0.28px;-webkit-text-stroke:0">6</div>
<div class="t" style="left:234.89px;width:300px;text-align:right;top:603.10px;font-size:10.4px;color:#1e1e1e;font-weight:bold;letter-spacing:-0.28px;-webkit-text-stroke:0">8</div>
<div class="t" style="left:286.05499999999995px;width:300px;text-align:right;top:603.10px;font-size:10.4px;color:#1e1e1e;font-weight:bold;letter-spacing:-0.28px;-webkit-text-stroke:0">11</div>
<div class="t" style="left:337.22px;width:300px;text-align:right;top:603.10px;font-size:10.4px;color:#1e1e1e;font-weight:bold;letter-spacing:-0.28px;-webkit-text-stroke:0">15</div>
<div class="t" style="left:388.385px;width:300px;text-align:right;top:603.10px;font-size:10.4px;color:#1e1e1e;font-weight:bold;letter-spacing:-0.28px;-webkit-text-stroke:0">19</div>
<div class="t" style="left:439.54999999999995px;width:300px;text-align:right;top:603.10px;font-size:10.4px;color:#1e1e1e;font-weight:bold;letter-spacing:-0.28px;-webkit-text-stroke:0">23</div>
<div class="t" style="left:490.7149999999999px;width:300px;text-align:right;top:603.10px;font-size:10.4px;color:#1e1e1e;font-weight:bold;letter-spacing:-0.28px;-webkit-text-stroke:0">28</div>
<div class="t" style="left:541.88px;width:300px;text-align:right;top:603.10px;font-size:10.4px;color:#1e1e1e;font-weight:bold;letter-spacing:-0.28px;-webkit-text-stroke:0">33</div>
<div class="t" style="left:593.045px;width:300px;text-align:right;top:603.10px;font-size:10.4px;color:#1e1e1e;font-weight:bold;letter-spacing:-0.28px;-webkit-text-stroke:0">38</div>
<div class="t" style="left:644.2099999999999px;width:300px;text-align:right;top:603.10px;font-size:10.4px;color:#1e1e1e;font-weight:bold;letter-spacing:-0.28px;-webkit-text-stroke:0">44</div>
<div class="t" style="left:695.375px;width:300px;text-align:right;top:603.10px;font-size:10.4px;color:#1e1e1e;font-weight:bold;letter-spacing:-0.28px;-webkit-text-stroke:0">51</div>
<div class="t" style="left:746.54px;width:300px;text-align:right;top:603.10px;font-size:10.4px;color:#1e1e1e;font-weight:bold;letter-spacing:-0.28px;-webkit-text-stroke:0">58</div>
<div class="t" style="left:797.7049999999999px;width:300px;text-align:right;top:603.10px;font-size:10.4px;color:#1e1e1e;font-weight:bold;letter-spacing:-0.28px;-webkit-text-stroke:0">65</div>
<div class="t" style="left:848.8700000000001px;width:300px;text-align:right;top:603.10px;font-size:10.4px;color:#1e1e1e;font-weight:bold;letter-spacing:-0.28px;-webkit-text-stroke:0">73</div>
<div class="t" style="left:900.0350000000001px;width:300px;text-align:right;top:603.10px;font-size:10.4px;color:#1e1e1e;font-weight:bold;letter-spacing:-0.28px;-webkit-text-stroke:0">82</div>
<div class="t" style="left:951.2px;width:300px;text-align:right;top:603.10px;font-size:10.4px;color:#1e1e1e;font-weight:bold;letter-spacing:-0.28px;-webkit-text-stroke:0">90</div>
<div class="t" style="left:-139.75px;width:300px;text-align:center;top:620.17px;font-size:10.2px;color:#555;font-weight:normal;">31</div>
<div class="t" style="left:22.5px;top:619.03px;font-size:10.6px;color:#1e1e1e;font-weight:bold;letter-spacing:-0.28px;-webkit-text-stroke:0">Сопротивление, Вт</div>
<div class="t" style="left:-72.1px;width:300px;text-align:right;top:619.10px;font-size:10.4px;color:#1e1e1e;font-weight:bold;letter-spacing:-0.28px;-webkit-text-stroke:0">0</div>
<div class="t" style="left:-20.935000000000002px;width:300px;text-align:right;top:619.10px;font-size:10.4px;color:#1e1e1e;font-weight:bold;letter-spacing:-0.28px;-webkit-text-stroke:0">1</div>
<div class="t" style="left:30.230000000000018px;width:300px;text-align:right;top:619.10px;font-size:10.4px;color:#1e1e1e;font-weight:bold;letter-spacing:-0.28px;-webkit-text-stroke:0">8</div>
<div class="t" style="left:81.39499999999998px;width:300px;text-align:right;top:619.10px;font-size:10.4px;color:#1e1e1e;font-weight:bold;letter-spacing:-0.28px;-webkit-text-stroke:0">28</div>
<div class="t" style="left:132.56px;width:300px;text-align:right;top:619.10px;font-size:10.4px;color:#1e1e1e;font-weight:bold;letter-spacing:-0.28px;-webkit-text-stroke:0">65</div>
<div class="t" style="left:183.72500000000002px;width:300px;text-align:right;top:619.10px;font-size:10.4px;color:#1e1e1e;font-weight:bold;letter-spacing:-0.28px;-webkit-text-stroke:0">127</div>
<div class="t" style="left:234.89px;width:300px;text-align:right;top:619.10px;font-size:10.4px;color:#1e1e1e;font-weight:bold;letter-spacing:-0.28px;-webkit-text-stroke:0">220</div>
<div class="t" style="left:286.05499999999995px;width:300px;text-align:right;top:619.10px;font-size:10.4px;color:#1e1e1e;font-weight:bold;letter-spacing:-0.28px;-webkit-text-stroke:0">349</div>
<div class="t" style="left:337.22px;width:300px;text-align:right;top:619.10px;font-size:10.4px;color:#1e1e1e;font-weight:bold;letter-spacing:-0.28px;-webkit-text-stroke:0">521</div>
<div class="t" style="left:388.385px;width:300px;text-align:right;top:619.10px;font-size:10.4px;color:#1e1e1e;font-weight:bold;letter-spacing:-0.28px;-webkit-text-stroke:0">742</div>
<div class="t" style="left:439.54999999999995px;width:300px;text-align:right;top:619.10px;font-size:10.4px;color:#1e1e1e;font-weight:bold;letter-spacing:-0.28px;-webkit-text-stroke:0">1018</div>
<div class="t" style="left:490.7149999999999px;width:300px;text-align:right;top:619.10px;font-size:10.4px;color:#1e1e1e;font-weight:bold;letter-spacing:-0.28px;-webkit-text-stroke:0">1355</div>
<div class="t" style="left:541.88px;width:300px;text-align:right;top:619.10px;font-size:10.4px;color:#1e1e1e;font-weight:bold;letter-spacing:-0.28px;-webkit-text-stroke:0">1759</div>
<div class="t" style="left:593.045px;width:300px;text-align:right;top:619.10px;font-size:10.4px;color:#1e1e1e;font-weight:bold;letter-spacing:-0.28px;-webkit-text-stroke:0">2236</div>
<div class="t" style="left:644.2099999999999px;width:300px;text-align:right;top:619.10px;font-size:10.4px;color:#1e1e1e;font-weight:bold;letter-spacing:-0.28px;-webkit-text-stroke:0">2793</div>
<div class="t" style="left:695.375px;width:300px;text-align:right;top:619.10px;font-size:10.4px;color:#1e1e1e;font-weight:bold;letter-spacing:-0.28px;-webkit-text-stroke:0">3435</div>
<div class="t" style="left:746.54px;width:300px;text-align:right;top:619.10px;font-size:10.4px;color:#1e1e1e;font-weight:bold;letter-spacing:-0.28px;-webkit-text-stroke:0">4169</div>
<div class="t" style="left:797.7049999999999px;width:300px;text-align:right;top:619.10px;font-size:10.4px;color:#1e1e1e;font-weight:bold;letter-spacing:-0.28px;-webkit-text-stroke:0">5000</div>
<div class="t" style="left:848.8700000000001px;width:300px;text-align:right;top:619.10px;font-size:10.4px;color:#1e1e1e;font-weight:bold;letter-spacing:-0.28px;-webkit-text-stroke:0">5935</div>
<div class="t" style="left:900.0350000000001px;width:300px;text-align:right;top:619.10px;font-size:10.4px;color:#1e1e1e;font-weight:bold;letter-spacing:-0.28px;-webkit-text-stroke:0">6980</div>
<div class="t" style="left:951.2px;width:300px;text-align:right;top:619.10px;font-size:10.4px;color:#1e1e1e;font-weight:bold;letter-spacing:-0.28px;-webkit-text-stroke:0">8142</div>
<div class="t" style="left:-139.75px;width:300px;text-align:center;top:636.17px;font-size:10.2px;color:#555;font-weight:normal;">32</div>
<div class="t" style="left:22.5px;top:635.03px;font-size:10.6px;color:#1e1e1e;font-weight:bold;letter-spacing:-0.28px;-webkit-text-stroke:0">Затраты мощи на скорость</div>
<div class="t" style="left:-72.1px;width:300px;text-align:right;top:635.10px;font-size:10.4px;color:#1e1e1e;font-weight:bold;letter-spacing:-0.28px;-webkit-text-stroke:0">0</div>
<div class="t" style="left:-20.935000000000002px;width:300px;text-align:right;top:635.10px;font-size:10.4px;color:#1e1e1e;font-weight:bold;letter-spacing:-0.28px;-webkit-text-stroke:0">1</div>
<div class="t" style="left:30.230000000000018px;width:300px;text-align:right;top:635.10px;font-size:10.4px;color:#1e1e1e;font-weight:bold;letter-spacing:-0.28px;-webkit-text-stroke:0">8</div>
<div class="t" style="left:81.39499999999998px;width:300px;text-align:right;top:635.10px;font-size:10.4px;color:#1e1e1e;font-weight:bold;letter-spacing:-0.28px;-webkit-text-stroke:0">28</div>
<div class="t" style="left:132.56px;width:300px;text-align:right;top:635.10px;font-size:10.4px;color:#1e1e1e;font-weight:bold;letter-spacing:-0.28px;-webkit-text-stroke:0">65</div>
<div class="t" style="left:183.72500000000002px;width:300px;text-align:right;top:635.10px;font-size:10.4px;color:#1e1e1e;font-weight:bold;letter-spacing:-0.28px;-webkit-text-stroke:0">127</div>
<div class="t" style="left:234.89px;width:300px;text-align:right;top:635.10px;font-size:10.4px;color:#1e1e1e;font-weight:bold;letter-spacing:-0.28px;-webkit-text-stroke:0">220</div>
<div class="t" style="left:286.05499999999995px;width:300px;text-align:right;top:635.10px;font-size:10.4px;color:#1e1e1e;font-weight:bold;letter-spacing:-0.28px;-webkit-text-stroke:0">349</div>
<div class="t" style="left:337.22px;width:300px;text-align:right;top:635.10px;font-size:10.4px;color:#1e1e1e;font-weight:bold;letter-spacing:-0.28px;-webkit-text-stroke:0">521</div>
<div class="t" style="left:388.385px;width:300px;text-align:right;top:635.10px;font-size:10.4px;color:#1e1e1e;font-weight:bold;letter-spacing:-0.28px;-webkit-text-stroke:0">742</div>
<div class="t" style="left:439.54999999999995px;width:300px;text-align:right;top:635.10px;font-size:10.4px;color:#1e1e1e;font-weight:bold;letter-spacing:-0.28px;-webkit-text-stroke:0">1018</div>
<div class="t" style="left:490.7149999999999px;width:300px;text-align:right;top:635.10px;font-size:10.4px;color:#1e1e1e;font-weight:bold;letter-spacing:-0.28px;-webkit-text-stroke:0">1355</div>
<div class="t" style="left:541.88px;width:300px;text-align:right;top:635.10px;font-size:10.4px;color:#1e1e1e;font-weight:bold;letter-spacing:-0.28px;-webkit-text-stroke:0">1759</div>
<div class="t" style="left:593.045px;width:300px;text-align:right;top:635.10px;font-size:10.4px;color:#1e1e1e;font-weight:bold;letter-spacing:-0.28px;-webkit-text-stroke:0">2236</div>
<div class="t" style="left:644.2099999999999px;width:300px;text-align:right;top:635.10px;font-size:10.4px;color:#1e1e1e;font-weight:bold;letter-spacing:-0.28px;-webkit-text-stroke:0">2793</div>
<div class="t" style="left:695.375px;width:300px;text-align:right;top:635.10px;font-size:10.4px;color:#1e1e1e;font-weight:bold;letter-spacing:-0.28px;-webkit-text-stroke:0">3435</div>
<div class="t" style="left:746.54px;width:300px;text-align:right;top:635.10px;font-size:10.4px;color:#1e1e1e;font-weight:bold;letter-spacing:-0.28px;-webkit-text-stroke:0">4169</div>
<div class="t" style="left:797.7049999999999px;width:300px;text-align:right;top:635.10px;font-size:10.4px;color:#1e1e1e;font-weight:bold;letter-spacing:-0.28px;-webkit-text-stroke:0">5000</div>
<div class="t" style="left:848.8700000000001px;width:300px;text-align:right;top:635.10px;font-size:10.4px;color:#1e1e1e;font-weight:bold;letter-spacing:-0.28px;-webkit-text-stroke:0">5935</div>
<div class="t" style="left:900.0350000000001px;width:300px;text-align:right;top:635.10px;font-size:10.4px;color:#1e1e1e;font-weight:bold;letter-spacing:-0.28px;-webkit-text-stroke:0">6980</div>
<div class="t" style="left:951.2px;width:300px;text-align:right;top:635.10px;font-size:10.4px;color:#1e1e1e;font-weight:bold;letter-spacing:-0.28px;-webkit-text-stroke:0">8142</div>
</div>
<div class="b" style="left:169.5px;top:517.5px;width:1084.7px;height:20.299999999999955px;border:2px solid #217346;box-sizing:border-box"></div>
<div class="b" style="left:1251.2px;top:534.8px;width:5px;height:5px;background:#217346;border:1px solid #fff;box-sizing:border-box"></div>
<div class="b" style="left:1262.5px;top:151.2px;width:17.5px;height:497.09999999999997px;background:#fff"></div>
<div class="b" style="left:1265.5px;top:152.5px;width:12.5px;height:12.1px;border:1px solid #c6c6c6;box-sizing:border-box;background:#fff"></div>
<svg class="b" style="left:1268.5px;top:156px" width="7" height="4" viewBox="0 0 7 4"><path d="M0 4H7L3.5 0Z" fill="#666"/></svg>
<div class="b" style="left:1265.5px;top:165.5px;width:12.5px;height:472px;background:#eeeeee"></div>
<div class="b" style="left:1265.5px;top:189px;width:12.5px;height:359px;border:1px solid #c6c6c6;box-sizing:border-box;background:#fff"></div>
<div class="b" style="left:1265.5px;top:637.8px;width:12.5px;height:10.5px;border:1px solid #c6c6c6;box-sizing:border-box;background:#fff"></div>
<svg class="b" style="left:1268.5px;top:641px" width="7" height="4" viewBox="0 0 7 4"><path d="M0 0H7L3.5 4Z" fill="#666"/></svg>
<div class="b" style="left:0px;top:648px;width:1280px;height:22.3px;background:#f6f6f6"></div>
<div class="b" style="left:0px;top:648px;width:1262.5px;height:0.8px;background:#c8c8c8"></div>
<svg class="b" style="left:20px;top:655px" width="5" height="7" viewBox="0 0 5 7"><path d="M5 0V7L0 3.5Z" fill="#c8c8c8"/></svg>
<svg class="b" style="left:44px;top:655px" width="5" height="7" viewBox="0 0 5 7"><path d="M0 0V7L5 3.5Z" fill="#c8c8c8"/></svg>
<div class="b" style="left:80px;top:651px;width:1px;height:16px;background:#c0c0c0"></div>
<div class="t" style="left:-54px;width:300px;text-align:center;top:651.60px;font-size:11.87px;color:#444;font-weight:normal;transform:scaleX(0.893);transform-origin:center;">int</div>
<div class="b" style="left:113.4px;top:648px;width:35.2px;height:21px;background:#fff;border-left:1px solid #c6c6c6;border-right:1px solid #c6c6c6;box-sizing:border-box"></div>
<div class="b" style="left:113.4px;top:666.5px;width:35.2px;height:2px;background:#217346"></div>
<div class="t" style="left:-19.69999999999999px;width:300px;text-align:center;top:651.60px;font-size:11.87px;color:#217346;font-weight:bold;transform:scaleX(0.893);transform-origin:center;">tab</div>
<div class="t" style="left:21px;width:300px;text-align:center;top:651.60px;font-size:11.87px;color:#444;font-weight:normal;transform:scaleX(0.893);transform-origin:center;">36к15</div>
<div class="b" style="left:195px;top:651px;width:1px;height:16px;background:#c0c0c0"></div>
<div class="t" style="left:68.5px;width:300px;text-align:center;top:651.60px;font-size:11.87px;color:#444;font-weight:normal;transform:scaleX(0.893);transform-origin:center;">15к60</div>
<div class="b" style="left:241.5px;top:651px;width:1px;height:16px;background:#c0c0c0"></div>
<svg class="b" style="left:268.5px;top:652px" width="14" height="14" viewBox="0 0 14 14"><circle cx="7" cy="7" r="6.2" fill="none" stroke="#777" stroke-width="1.1"/><path d="M7 3.5V10.5M3.5 7H10.5" stroke="#666" stroke-width="1.3"/></svg>
<div class="b" style="left:768.2px;top:655px;width:1.2px;height:1.2px;background:#999"></div>
<div class="b" style="left:768.2px;top:659px;width:1.2px;height:1.2px;background:#999"></div>
<div class="b" style="left:768.2px;top:663px;width:1.2px;height:1.2px;background:#999"></div>
<div class="b" style="left:781.6px;top:653.5px;width:480.2px;height:12.1px;background:#eaeaea"></div>
<div class="b" style="left:781.6px;top:653.5px;width:12.2px;height:12.1px;border:1px solid #c6c6c6;box-sizing:border-box;background:#fff"></div>
<svg class="b" style="left:785.5px;top:656px" width="4" height="7" viewBox="0 0 4 7"><path d="M4 0V7L0 3.5Z" fill="#666"/></svg>
<div class="b" style="left:793.8px;top:653.5px;width:318.8px;height:12.1px;border:1px solid #c6c6c6;box-sizing:border-box;background:#fff"></div>
<div class="b" style="left:1249.6px;top:653.5px;width:12.2px;height:12.1px;border:1px solid #c6c6c6;box-sizing:border-box;background:#fff"></div>
<svg class="b" style="left:1254px;top:656px" width="4" height="7" viewBox="0 0 4 7"><path d="M0 0V7L4 3.5Z" fill="#666"/></svg>
<div class="b" style="left:0px;top:670.3px;width:1280px;height:17.7px;background:#217346"></div>
<div class="t" style="left:5px;top:672.30px;font-size:9.63px;color:#fff;font-weight:normal;transform:scaleX(0.893);transform-origin:left;">ГОТОВО</div>
<div class="t" style="left:754.8px;top:672.30px;font-size:9.3px;color:#fff;font-weight:normal;transform:scaleX(0.893);transform-origin:left;">СРЕДНЕЕ: 0,544444444</div>
<div class="t" style="left:860.6px;top:672.30px;font-size:9.3px;color:#fff;font-weight:normal;transform:scaleX(0.893);transform-origin:left;">КОЛИЧЕСТВО: 21</div>
<div class="t" style="left:944px;top:672.30px;font-size:9.3px;color:#fff;font-weight:normal;transform:scaleX(0.893);transform-origin:left;">СУММА: 11,43333333</div>
<div class="b" style="left:1046.5px;top:670.3px;width:30.5px;height:17.7px;background:#1a5c38"></div>
<svg class="b" style="left:1056px;top:673.5px" width="11" height="11" viewBox="0 0 11 11"><path d="M0.5 0.5H10.5V10.5H0.5ZM0.5 3.8H10.5M0.5 7.2H10.5M3.8 0.5V10.5M7.2 0.5V10.5" fill="none" stroke="#fff" stroke-width="1"/></svg>
<svg class="b" style="left:1086px;top:673.5px" width="12" height="11" viewBox="0 0 12 11"><rect x="0.5" y="0.5" width="11" height="10" fill="none" stroke="#fff"/><rect x="3.5" y="2.5" width="5" height="6" fill="none" stroke="#fff"/></svg>
<svg class="b" style="left:1117px;top:673.5px" width="12" height="11" viewBox="0 0 12 11"><rect x="0.5" y="0.5" width="11" height="10" fill="none" stroke="#fff"/><rect x="1" y="1" width="3.5" height="5" fill="#fff"/><rect x="5.5" y="1" width="3.5" height="5" fill="#fff"/></svg>
<div class="b" style="left:1141px;top:678.5px;width:6px;height:1.6px;background:#fff"></div>
<div class="b" style="left:1149.7px;top:678.8px;width:79.7px;height:1px;background:#d0e6d8"></div>
<div class="b" style="left:1188px;top:673.5px;width:3.2px;height:11px;background:#fff"></div>
<div class="b" style="left:1233px;top:678.5px;width:7px;height:1.6px;background:#fff"></div>
<div class="b" style="left:1235.7px;top:675.8px;width:1.6px;height:7px;background:#fff"></div>
<div class="t" style="left:1252px;top:672.30px;font-size:9.63px;color:#fff;font-weight:normal;transform:scaleX(0.893);transform-origin:left;">100%</div>
<div class="b" style="left:0px;top:688px;width:1280px;height:32px;background:#7b7b7b"></div>
<svg class="b" style="left:9.5px;top:693.5px" width="21" height="20" viewBox="0 0 21 20"><path d="M0 2.6L8.5 1.4V9.4H0ZM9.5 1.3L21 0V9.4H9.5ZM0 10.5H8.5V18.6L0 17.4ZM9.5 10.5H21V20L9.5 18.7Z" fill="#fff"/></svg>
<div class="b" style="left:41.5px;top:689px;width:43px;height:30px;background:#8e8e8e;border:1px solid #9e9e9e;box-sizing:border-box"></div>
<div class="b" style="left:84.5px;top:689px;width:3.5px;height:30px;background:#8e8e8e;border:1px solid #9e9e9e;border-left:none;box-sizing:border-box"></div>
<svg class="b" style="left:49.5px;top:693px" width="26" height="24" viewBox="0 0 26 24"><path d="M1 3H8L10 1H16V5H1Z" fill="#e6b34a"/><rect x="1" y="4" width="24" height="15" fill="#f6d36e"/><rect x="3" y="6" width="20" height="3" fill="#fff3c0"/><path d="M4 13H22V23H18V17H8V23H4Z" fill="#3a8fd8"/><rect x="8" y="17" width="10" height="6" fill="#8cc8f0"/></svg>
<div class="b" style="left:91px;top:689px;width:47px;height:30px;background:#8e8e8e;border:1px solid #9e9e9e;box-sizing:border-box"></div>
<svg class="b" style="left:102px;top:691.5px" width="25" height="25" viewBox="0 0 25 25"><ellipse cx="12.5" cy="12.5" rx="12.2" ry="12.2" fill="#e0161e"/><ellipse cx="12.5" cy="12.5" rx="4.6" ry="7.2" fill="#8e8e8e"/></svg>
<div class="b" style="left:141px;top:689px;width:46.5px;height:30px;background:#8e8e8e;border:1px solid #9e9e9e;box-sizing:border-box"></div>
<svg class="b" style="left:152px;top:691.5px" width="25" height="25" viewBox="0 0 25 25"><circle cx="11.5" cy="12.5" r="11.5" fill="#3c9ed8"/><path d="M5 12L18.5 6L15.5 18L11.5 14.5Z" fill="#fff"/><rect x="16" y="16" width="7" height="9" fill="#777"/><rect x="18.5" y="18" width="2" height="5" fill="#ddd"/></svg>
<svg class="b" style="left:201px;top:692px" width="24" height="23" viewBox="0 0 24 23"><rect x="0" y="0" width="24" height="23" fill="#0f8a2c"/><rect x="5" y="3" width="14" height="4" fill="#fff"/><path d="M5 9H8V12H5ZM10.5 9H13.5V12H10.5ZM16 9H19V12H16ZM5 14H8V17H5ZM10.5 14H13.5V17H10.5ZM16 14H19V17H16ZM5 19H8V21H5ZM10.5 19H13.5V21H10.5ZM16 19H19V21H16Z" fill="#fff"/></svg>
<div class="b" style="left:240px;top:689px;width:46px;height:30px;background:#a6a6a6;border:1px solid #b8b8b8;box-sizing:border-box"></div>
<svg class="b" style="left:250px;top:692px" width="26" height="23" viewBox="0 0 26 23"><rect x="11" y="3" width="14" height="17" fill="#fff" stroke="#1e7145"/><path d="M11 7.5H25M11 11.5H25M11 15.5H25M18 3V20" stroke="#1e7145" stroke-width="1"/><path d="M0 2.5L14 0V23L0 20.5Z" fill="#1e7145"/><path d="M3.5 7L9.5 16M9.5 7L3.5 16" stroke="#fff" stroke-width="2"/></svg>
<svg class="b" style="left:1092px;top:703px" width="7" height="4" viewBox="0 0 7 4"><path d="M0 4L3.5 0L7 4Z" fill="#e0e0e0"/></svg>
<svg class="b" style="left:1108px;top:698px" width="13" height="13" viewBox="0 0 13 13"><path d="M1 0V13" stroke="#eee" stroke-width="1.3"/><path d="M1.5 0.5H9L8 3L9 5.5H1.5Z" fill="#eee"/><circle cx="9" cy="9" r="3.8" fill="#f4f4f4"/><path d="M7 7L11 11M11 7L7 11" stroke="#e02020" stroke-width="1.4"/></svg>
<svg class="b" style="left:1127px;top:697px" width="14" height="14" viewBox="0 0 14 14"><circle cx="3" cy="2.5" r="2" fill="#eee"/><rect x="1" y="5" width="4" height="8" fill="#eee"/><rect x="7" y="2" width="6.5" height="12" fill="none" stroke="#eee" stroke-width="1.2"/><rect x="8.8" y="4" width="3" height="8" fill="#bbb"/></svg>
<svg class="b" style="left:1146px;top:700px" width="13" height="10" viewBox="0 0 13 10"><path d="M0 8H2V10H0ZM3 6H5V10H3ZM6 4H8V10H6ZM9 2H11V10H9Z" fill="#eee"/><path d="M12 0H13V10H12Z" fill="#aaa"/></svg>
<svg class="b" style="left:1166px;top:698px" width="12" height="13" viewBox="0 0 12 13"><path d="M0 4H3L7 0V13L3 9H0Z" fill="#eee"/><path d="M9 3Q12 6.5 9 10" fill="none" stroke="#ccc" stroke-width="1"/></svg>
<div class="t" style="left:1049.2px;width:300px;text-align:center;top:697.00px;font-size:10.75px;color:#fff;font-weight:normal;transform:scaleX(0.893);transform-origin:center;">РУС</div>
<div class="t" style="left:1093.3px;width:300px;text-align:center;top:691.00px;font-size:10.75px;color:#fff;font-weight:normal;transform:scaleX(0.893);transform-origin:center;">23:21</div>
<div class="t" style="left:1093.5px;width:300px;text-align:center;top:704.80px;font-size:10.42px;color:#fff;font-weight:normal;transform:scaleX(0.893);transform-origin:center;">05.11.2016</div>
</body></html>
